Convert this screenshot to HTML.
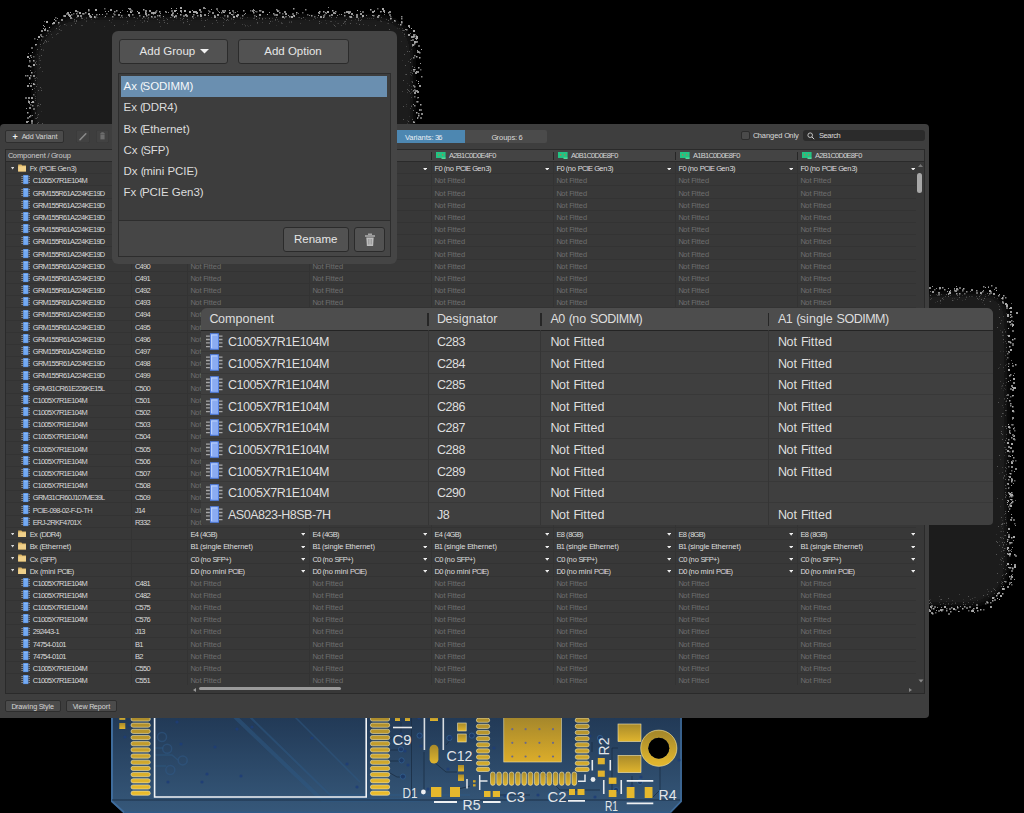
<!DOCTYPE html><html><head><meta charset="utf-8"><style>
*{box-sizing:border-box}
html,body{margin:0;padding:0;background:#000;width:1024px;height:813px;overflow:hidden;font-family:"Liberation Sans", sans-serif}
.a{position:absolute}
.sh{position:absolute;background:#131313;filter:blur(2px)}
#win{position:absolute;left:0;top:124px;width:929px;height:593.5px;background:#3e3e3e;border-radius:4px 4px 4px 0}
.btn{position:absolute;background:#4b4b4b;border:1px solid #2e2e2e;border-radius:2px;color:#d6d6d6;font-size:7.2px;text-align:center}
#tbl{position:absolute;left:4.5px;top:25.4px;width:920px;height:544.5px;background:#383838;border:1px solid #2a2a2a}
.hdr{position:absolute;left:0;top:0;width:918px;height:11.6px;background:#444444;border-bottom:1px solid #2a2a2a}
.t{position:absolute;white-space:nowrap;font-size:7.5px;line-height:9px;color:#dadada}
.t{letter-spacing:-0.05px}
x{letter-spacing:-0.74px}
y{letter-spacing:-0.45px}
z{letter-spacing:-0.3px}
.nf{color:#6e6e6e}
.rl{position:absolute;left:0;width:910px;height:1px;background:#333333}
.vl{position:absolute;width:1px;background:#333333}
.ci{position:absolute}
.fo{position:absolute}
.tr{position:absolute}
#pop{position:absolute;left:111.5px;top:31px;width:285.5px;height:232.5px;background:#454545;border-radius:6px}
.pbtn{position:absolute;background:#525252;border:1px solid #2b2b2b;border-radius:3px;color:#e6e6e6;font-size:11.5px;text-align:center}
#ov{position:absolute;left:200.5px;top:308px;width:792.5px;height:216.5px;background:#3f3f3f;border-radius:6px 6px 4px 4px;overflow:hidden}
.ot{position:absolute;white-space:nowrap;font-size:12.5px;line-height:14px;color:#dedede;letter-spacing:0.05px}
#ov x{letter-spacing:-0.48px}
#ov y{letter-spacing:-0.5px}
#ov z{letter-spacing:0.3px}
#pop y{letter-spacing:-1.4px}
#pop z{letter-spacing:0px}
#pop x{letter-spacing:-0.05px}

</style></head><body>
<svg class="a" style="left:0;top:0" width="1024" height="813" viewBox="0 0 1024 813"><defs><filter id="sb" x="-5%" y="-5%" width="110%" height="110%"><feGaussianBlur stdDeviation="3"/></filter></defs><path d="M82 17H378A35 35 0 0 1 413 52V150A0 0 0 0 1 413 150H34A0 0 0 0 1 34 150V65A48 48 0 0 1 82 17Z" fill="#1a1a1a" filter="url(#sb)"/><path d="M180 7h2v2h-2zM171 8h1v1h-1zM382 8h2v2h-2zM95 9h2v2h-2zM143 9h1.5v1.5h-1.5zM370 9h1.5v1.5h-1.5zM174 10h2v2h-2zM176 10h1v1h-1zM184 10h2v2h-2zM229 10h1v1h-1zM277 10h2v2h-2zM332 10h1.5v1.5h-1.5zM357 10h1v1h-1zM130 11h2v2h-2zM137 11h1v1h-1zM159 11h1.5v1.5h-1.5zM189 11h2v2h-2zM193 11h2v2h-2zM195 11h2v2h-2zM223 11h2v2h-2zM319 11h1.5v1.5h-1.5zM323 11h1.5v1.5h-1.5zM327 11h2v2h-2zM374 11h1v1h-1zM70 12h1v1h-1zM79 12h2v2h-2zM120 12h1v1h-1zM138 12h2v2h-2zM145 12h1.5v1.5h-1.5zM153 12h2v2h-2zM196 12h2v2h-2zM219 12h1v1h-1zM296 12h1.5v1.5h-1.5zM318 12h1.5v1.5h-1.5zM384 12h1v1h-1zM83 13h1.5v1.5h-1.5zM88 13h2v2h-2zM173 13h1v1h-1zM319 13h1v1h-1zM335 13h1v1h-1zM99 14h1v1h-1zM180 14h1.5v1.5h-1.5zM200 14h1.5v1.5h-1.5zM231 14h1v1h-1zM267 14h1v1h-1zM69 15h2v2h-2zM159 15h1.5v1.5h-1.5zM172 15h1.5v1.5h-1.5zM236 15h2v2h-2zM293 15h1.5v1.5h-1.5zM294 15h1v1h-1zM318 15h1v1h-1zM362 15h2v2h-2zM378 15h1.5v1.5h-1.5zM94 16h2v2h-2zM151 16h1.5v1.5h-1.5zM174 16h2v2h-2zM175 16h1.5v1.5h-1.5zM233 16h2v2h-2zM256 16h1v1h-1zM291 16h2v2h-2zM294 16h1v1h-1zM323 16h2v2h-2zM390 18h1.5v1.5h-1.5zM54 19h1v1h-1zM394 20h1.5v1.5h-1.5zM46 21h2v2h-2zM53 22h2v2h-2zM58 22h1.5v1.5h-1.5zM401 22h1.5v1.5h-1.5zM52 23h1.5v1.5h-1.5zM400 24h1.5v1.5h-1.5zM43 25h1v1h-1zM49 27h1v1h-1zM409 27h1v1h-1zM411 28h1v1h-1zM413 30h2v2h-2zM414 34h1.5v1.5h-1.5zM38 36h2v2h-2zM413 36h1v1h-1zM416 36h2v2h-2zM416 37h2v2h-2zM414 41h2v2h-2zM35 44h1.5v1.5h-1.5zM421 49h1v1h-1zM27 56h2v2h-2zM416 56h1.5v1.5h-1.5zM419 57h1.5v1.5h-1.5zM33 60h1.5v1.5h-1.5zM33 64h2v2h-2zM418 67h1.5v1.5h-1.5zM413 69h2v2h-2zM416 71h2v2h-2zM31 72h1.5v1.5h-1.5zM29 77h1.5v1.5h-1.5zM418 81h1v1h-1zM33 83h2v2h-2zM418 83h1v1h-1zM32 101h2v2h-2zM31 102h1v1h-1zM420 104h1.5v1.5h-1.5zM27 112h1.5v1.5h-1.5zM416 112h1.5v1.5h-1.5zM418 115h1.5v1.5h-1.5zM29 116h1.5v1.5h-1.5zM413 122h1v1h-1zM414 122h1v1h-1z" fill="#aaaaaa"/><path d="M203 7h2v2h-2zM328 7h1v1h-1zM129 8h2v2h-2zM205 8h1v1h-1zM130 9h1.5v1.5h-1.5zM305 9h1.5v1.5h-1.5zM88 10h1.5v1.5h-1.5zM145 10h2v2h-2zM222 10h2v2h-2zM252 10h2v2h-2zM260 10h1.5v1.5h-1.5zM374 10h1v1h-1zM77 11h1.5v1.5h-1.5zM209 11h1.5v1.5h-1.5zM284 11h2v2h-2zM349 11h2v2h-2zM360 11h1v1h-1zM389 11h2v2h-2zM166 12h1v1h-1zM168 12h1v1h-1zM181 12h1v1h-1zM212 12h2v2h-2zM221 12h1.5v1.5h-1.5zM235 12h1v1h-1zM76 13h1.5v1.5h-1.5zM82 13h1.5v1.5h-1.5zM152 13h1v1h-1zM326 13h1v1h-1zM69 14h1v1h-1zM71 14h1.5v1.5h-1.5zM96 14h1.5v1.5h-1.5zM114 14h1.5v1.5h-1.5zM118 14h2v2h-2zM132 14h1.5v1.5h-1.5zM193 14h1.5v1.5h-1.5zM204 14h2v2h-2zM244 14h1v1h-1zM276 14h2v2h-2zM331 14h2v2h-2zM356 14h2v2h-2zM80 15h2v2h-2zM121 15h1.5v1.5h-1.5zM139 15h1.5v1.5h-1.5zM157 15h1.5v1.5h-1.5zM175 15h2v2h-2zM186 15h2v2h-2zM197 15h1.5v1.5h-1.5zM227 15h1.5v1.5h-1.5zM242 15h1.5v1.5h-1.5zM309 15h1v1h-1zM329 15h1.5v1.5h-1.5zM337 15h1v1h-1zM366 15h1v1h-1zM373 15h1.5v1.5h-1.5zM379 15h1v1h-1zM112 16h1.5v1.5h-1.5zM129 16h1v1h-1zM289 16h1.5v1.5h-1.5zM349 16h1.5v1.5h-1.5zM356 16h2v2h-2zM377 16h2v2h-2zM401 16h1.5v1.5h-1.5zM70 17h2v2h-2zM57 18h1v1h-1zM391 18h1v1h-1zM401 18h1.5v1.5h-1.5zM61 19h2v2h-2zM55 20h1.5v1.5h-1.5zM45 28h1v1h-1zM406 29h1.5v1.5h-1.5zM41 30h2v2h-2zM413 34h2v2h-2zM41 36h1v1h-1zM413 37h1v1h-1zM37 39h1v1h-1zM411 40h1v1h-1zM416 41h2v2h-2zM413 44h1.5v1.5h-1.5zM417 51h2v2h-2zM32 52h1v1h-1zM414 55h1.5v1.5h-1.5zM31 57h1v1h-1zM413 57h1.5v1.5h-1.5zM29 58h1v1h-1zM29 60h1.5v1.5h-1.5zM28 65h2v2h-2zM30 66h1.5v1.5h-1.5zM417 71h2v2h-2zM25 75h1.5v1.5h-1.5zM27 75h1.5v1.5h-1.5zM33 75h2v2h-2zM421 76h1.5v1.5h-1.5zM30 85h2v2h-2zM413 85h1.5v1.5h-1.5zM414 86h1.5v1.5h-1.5zM413 90h1.5v1.5h-1.5zM415 90h2v2h-2zM416 90h2v2h-2zM28 97h2v2h-2zM29 103h1v1h-1zM32 105h1.5v1.5h-1.5zM414 105h1.5v1.5h-1.5zM29 107h2v2h-2zM419 109h1v1h-1zM419 110h1v1h-1zM418 113h1.5v1.5h-1.5zM421 113h2v2h-2zM30 115h1.5v1.5h-1.5zM32 115h1v1h-1zM417 117h1.5v1.5h-1.5zM31 120h2v2h-2zM413 121h1.5v1.5h-1.5z" fill="#888888"/><path d="M104 8h1.5v1.5h-1.5zM216 8h2v2h-2zM377 8h1.5v1.5h-1.5zM122 10h1v1h-1zM131 10h2v2h-2zM156 10h1.5v1.5h-1.5zM171 10h2v2h-2zM208 10h1.5v1.5h-1.5zM217 10h1v1h-1zM224 10h2v2h-2zM232 10h2v2h-2zM250 10h1.5v1.5h-1.5zM278 10h1.5v1.5h-1.5zM155 11h2v2h-2zM200 11h2v2h-2zM218 11h1v1h-1zM233 11h1v1h-1zM237 11h1v1h-1zM255 11h1v1h-1zM256 11h1.5v1.5h-1.5zM362 11h2v2h-2zM381 11h1v1h-1zM172 12h2v2h-2zM233 12h1.5v1.5h-1.5zM302 12h1.5v1.5h-1.5zM66 13h2v2h-2zM73 13h1.5v1.5h-1.5zM106 13h1.5v1.5h-1.5zM113 13h1.5v1.5h-1.5zM282 13h1.5v1.5h-1.5zM292 13h2v2h-2zM298 13h1v1h-1zM153 14h1v1h-1zM274 14h2v2h-2zM296 14h1v1h-1zM307 14h1.5v1.5h-1.5zM324 14h1.5v1.5h-1.5zM339 14h1v1h-1zM384 14h1v1h-1zM389 14h2v2h-2zM63 15h2v2h-2zM183 15h2v2h-2zM224 15h1.5v1.5h-1.5zM254 15h1.5v1.5h-1.5zM323 15h2v2h-2zM353 15h1v1h-1zM95 16h1.5v1.5h-1.5zM154 16h2v2h-2zM285 16h1.5v1.5h-1.5zM286 16h1v1h-1zM314 16h1.5v1.5h-1.5zM390 16h1.5v1.5h-1.5zM55 17h1.5v1.5h-1.5zM44 21h1v1h-1zM395 21h1v1h-1zM410 33h1v1h-1zM40 34h2v2h-2zM416 35h1v1h-1zM42 36h1.5v1.5h-1.5zM34 38h1.5v1.5h-1.5zM412 39h2v2h-2zM417 42h1v1h-1zM418 45h2v2h-2zM31 47h2v2h-2zM28 53h1v1h-1zM33 56h1.5v1.5h-1.5zM29 61h1.5v1.5h-1.5zM414 67h1v1h-1zM415 69h1v1h-1zM420 69h1.5v1.5h-1.5zM30 70h1v1h-1zM413 70h2v2h-2zM416 80h1v1h-1zM31 83h1v1h-1zM414 87h1v1h-1zM414 89h1.5v1.5h-1.5zM33 94h1.5v1.5h-1.5zM414 96h1.5v1.5h-1.5zM25 97h2v2h-2zM417 97h1.5v1.5h-1.5zM28 100h1v1h-1zM416 101h1.5v1.5h-1.5zM30 104h1.5v1.5h-1.5zM33 108h2v2h-2zM420 109h2v2h-2zM413 110h1v1h-1zM27 117h2v2h-2zM420 117h2v2h-2zM31 122h2v2h-2z" fill="#666666"/><path d="M128 8h1v1h-1zM176 8h1v1h-1zM293 8h1.5v1.5h-1.5zM88 9h1.5v1.5h-1.5zM110 9h2v2h-2zM199 9h2v2h-2zM211 9h1v1h-1zM253 9h1v1h-1zM276 9h1.5v1.5h-1.5zM75 10h2v2h-2zM116 10h1.5v1.5h-1.5zM149 10h2v2h-2zM180 10h2v2h-2zM192 10h1v1h-1zM225 10h1v1h-1zM243 10h1.5v1.5h-1.5zM254 10h1v1h-1zM259 10h1.5v1.5h-1.5zM383 10h2v2h-2zM105 11h1v1h-1zM108 11h1v1h-1zM114 11h1.5v1.5h-1.5zM127 11h1v1h-1zM165 11h1.5v1.5h-1.5zM262 11h2v2h-2zM335 11h1.5v1.5h-1.5zM346 11h2v2h-2zM347 11h2v2h-2zM372 11h2v2h-2zM380 11h1.5v1.5h-1.5zM67 12h2v2h-2zM85 12h1.5v1.5h-1.5zM151 12h2v2h-2zM154 12h2v2h-2zM229 12h2v2h-2zM253 12h1.5v1.5h-1.5zM269 12h1v1h-1zM279 12h1.5v1.5h-1.5zM325 12h1.5v1.5h-1.5zM333 12h2v2h-2zM344 12h1.5v1.5h-1.5zM348 12h2v2h-2zM388 12h1.5v1.5h-1.5zM145 13h2v2h-2zM160 13h1v1h-1zM172 13h1.5v1.5h-1.5zM177 13h1v1h-1zM208 13h1v1h-1zM245 13h1v1h-1zM273 13h1.5v1.5h-1.5zM285 13h2v2h-2zM351 13h2v2h-2zM360 13h2v2h-2zM68 14h2v2h-2zM92 14h1v1h-1zM102 14h1v1h-1zM128 14h2v2h-2zM148 14h1.5v1.5h-1.5zM171 14h2v2h-2zM185 14h2v2h-2zM217 14h2v2h-2zM232 14h1.5v1.5h-1.5zM237 14h2v2h-2zM259 14h2v2h-2zM341 14h1v1h-1zM361 14h1v1h-1zM64 15h2v2h-2zM77 15h2v2h-2zM89 15h2v2h-2zM129 15h1v1h-1zM146 15h1.5v1.5h-1.5zM200 15h2v2h-2zM208 15h1v1h-1zM214 15h1.5v1.5h-1.5zM288 15h1v1h-1zM311 15h1.5v1.5h-1.5zM344 15h1.5v1.5h-1.5zM372 15h1v1h-1zM90 16h2v2h-2zM105 16h1v1h-1zM143 16h1.5v1.5h-1.5zM163 16h1v1h-1zM192 16h1.5v1.5h-1.5zM214 16h2v2h-2zM227 16h1.5v1.5h-1.5zM282 16h2v2h-2zM320 16h2v2h-2zM350 16h2v2h-2zM401 21h1.5v1.5h-1.5zM408 25h2v2h-2zM44 26h1v1h-1zM43 28h1v1h-1zM44 29h2v2h-2zM405 29h1v1h-1zM47 30h1.5v1.5h-1.5zM408 34h2v2h-2zM411 36h2v2h-2zM414 36h1.5v1.5h-1.5zM415 38h1v1h-1zM416 39h1v1h-1zM414 43h1.5v1.5h-1.5zM36 44h1v1h-1zM412 44h2v2h-2zM417 50h1v1h-1zM418 51h1.5v1.5h-1.5zM419 52h1.5v1.5h-1.5zM30 55h1.5v1.5h-1.5zM420 63h1v1h-1zM415 72h2v2h-2zM30 75h1.5v1.5h-1.5zM29 78h1.5v1.5h-1.5zM29 83h1v1h-1zM27 85h2v2h-2zM419 85h2v2h-2zM32 89h1v1h-1zM417 91h2v2h-2zM414 92h2v2h-2zM415 93h1v1h-1zM31 97h2v2h-2zM418 97h1v1h-1zM28 101h2v2h-2zM417 101h1.5v1.5h-1.5zM413 104h1v1h-1zM26 108h1v1h-1zM417 118h1v1h-1zM26 121h2v2h-2zM28 121h1v1h-1z" fill="#999999"/><path d="M76 17h1v1h-1zM126 17h1v1h-1zM160 17h1v1h-1zM237 17h1v1h-1zM299 17h1v1h-1zM317 17h1v1h-1zM324 17h1v1h-1zM362 17h1v1h-1zM381 17h1v1h-1zM72 18h1v1h-1zM86 18h1v1h-1zM137 18h1v1h-1zM180 18h1v1h-1zM231 18h1v1h-1zM240 18h1v1h-1zM253 18h1v1h-1zM254 18h1v1h-1zM265 18h1v1h-1zM315 18h1v1h-1zM373 18h1v1h-1zM182 19h1v1h-1zM224 19h1v1h-1zM233 19h1v1h-1zM262 19h1v1h-1zM277 19h1v1h-1zM358 19h1v1h-1zM361 19h1v1h-1zM386 19h1v1h-1zM144 20h1v1h-1zM163 20h1v1h-1zM164 20h1v1h-1zM201 20h1v1h-1zM228 20h1v1h-1zM275 20h1v1h-1zM309 20h1v1h-1zM351 20h1v1h-1zM74 21h1v1h-1zM86 21h1v1h-1zM144 21h1v1h-1zM278 21h1v1h-1zM291 21h1v1h-1zM330 21h1v1h-1zM331 21h1v1h-1zM344 21h1v1h-1zM381 21h1v1h-1zM142 22h1v1h-1zM217 22h1v1h-1zM223 22h1v1h-1zM262 22h1v1h-1zM281 22h1v1h-1zM289 22h1v1h-1zM291 22h1v1h-1zM344 22h1v1h-1zM392 22h1v1h-1zM212 23h1v1h-1zM234 23h1v1h-1zM257 23h1v1h-1zM281 23h1v1h-1zM282 23h1v1h-1zM300 23h1v1h-1zM326 23h1v1h-1zM338 23h1v1h-1zM356 23h1v1h-1zM388 23h1v1h-1zM242 24h1v1h-1zM363 24h1v1h-1zM398 24h1v1h-1zM81 25h1v1h-1zM82 25h1v1h-1zM134 25h1v1h-1zM245 25h1v1h-1zM250 25h1v1h-1zM341 25h1v1h-1zM59 26h1v1h-1zM160 26h1v1h-1zM335 26h1v1h-1zM61 30h1v1h-1zM402 30h1v1h-1zM404 30h1v1h-1zM50 31h1v1h-1zM57 33h1v1h-1zM51 34h1v1h-1zM56 34h1v1h-1zM52 37h1v1h-1zM41 40h1v1h-1zM410 40h1v1h-1zM48 41h1v1h-1zM44 42h1v1h-1zM406 46h1v1h-1zM43 50h1v1h-1zM39 56h1v1h-1zM39 58h1v1h-1zM411 58h1v1h-1zM40 60h1v1h-1zM34 61h1v1h-1zM36 61h1v1h-1zM408 61h1v1h-1zM35 63h1v1h-1zM39 64h1v1h-1zM411 70h1v1h-1zM42 71h1v1h-1zM410 72h1v1h-1zM405 74h1v1h-1zM36 77h1v1h-1zM35 78h1v1h-1zM412 81h1v1h-1zM409 85h1v1h-1zM34 88h1v1h-1zM402 91h1v1h-1zM407 92h1v1h-1zM410 93h1v1h-1zM35 96h1v1h-1zM411 97h1v1h-1zM35 98h1v1h-1zM35 100h1v1h-1zM38 103h1v1h-1zM406 104h1v1h-1zM37 106h1v1h-1zM410 108h1v1h-1zM35 112h1v1h-1zM35 118h1v1h-1z" fill="#404040"/><path d="M77 17h1v1h-1zM86 17h1v1h-1zM89 17h1v1h-1zM97 17h1v1h-1zM104 17h1v1h-1zM133 17h1v1h-1zM171 17h1v1h-1zM175 17h1v1h-1zM195 17h1v1h-1zM211 17h1v1h-1zM217 17h1v1h-1zM220 17h1v1h-1zM222 17h1v1h-1zM240 17h1v1h-1zM247 17h1v1h-1zM254 17h1v1h-1zM259 17h1v1h-1zM298 17h1v1h-1zM352 17h1v1h-1zM360 17h1v1h-1zM95 18h1v1h-1zM145 18h1v1h-1zM147 18h1v1h-1zM148 18h1v1h-1zM153 18h1v1h-1zM163 18h1v1h-1zM166 18h1v1h-1zM176 18h1v1h-1zM201 18h1v1h-1zM272 18h1v1h-1zM367 18h1v1h-1zM369 18h1v1h-1zM371 18h1v1h-1zM84 19h1v1h-1zM91 19h1v1h-1zM112 19h1v1h-1zM148 19h1v1h-1zM207 19h1v1h-1zM231 19h1v1h-1zM305 19h1v1h-1zM313 19h1v1h-1zM355 19h1v1h-1zM74 20h1v1h-1zM86 20h1v1h-1zM140 20h1v1h-1zM159 20h1v1h-1zM173 20h1v1h-1zM180 20h1v1h-1zM191 20h1v1h-1zM325 20h1v1h-1zM380 20h1v1h-1zM135 21h1v1h-1zM272 21h1v1h-1zM289 21h1v1h-1zM335 21h1v1h-1zM380 21h1v1h-1zM94 22h1v1h-1zM111 22h1v1h-1zM235 22h1v1h-1zM321 22h1v1h-1zM127 23h1v1h-1zM183 23h1v1h-1zM337 23h1v1h-1zM345 23h1v1h-1zM387 23h1v1h-1zM58 24h1v1h-1zM65 24h1v1h-1zM123 24h1v1h-1zM244 24h1v1h-1zM333 24h1v1h-1zM345 24h1v1h-1zM60 25h1v1h-1zM66 25h1v1h-1zM247 25h1v1h-1zM276 25h1v1h-1zM368 25h1v1h-1zM104 26h1v1h-1zM245 26h1v1h-1zM248 26h1v1h-1zM286 26h1v1h-1zM397 28h1v1h-1zM399 28h1v1h-1zM402 28h1v1h-1zM60 30h1v1h-1zM402 32h1v1h-1zM48 33h1v1h-1zM58 33h1v1h-1zM404 33h1v1h-1zM404 36h1v1h-1zM41 39h1v1h-1zM44 41h1v1h-1zM401 41h1v1h-1zM46 42h1v1h-1zM40 46h1v1h-1zM43 49h1v1h-1zM411 49h1v1h-1zM37 54h1v1h-1zM39 60h1v1h-1zM402 60h1v1h-1zM39 68h1v1h-1zM35 71h1v1h-1zM34 72h1v1h-1zM411 72h1v1h-1zM410 74h1v1h-1zM411 75h1v1h-1zM34 78h1v1h-1zM37 78h1v1h-1zM411 81h1v1h-1zM407 83h1v1h-1zM35 84h1v1h-1zM37 84h1v1h-1zM411 86h1v1h-1zM41 88h1v1h-1zM412 91h1v1h-1zM35 92h1v1h-1zM411 92h1v1h-1zM34 102h1v1h-1zM411 105h1v1h-1zM39 106h1v1h-1zM406 106h1v1h-1zM41 111h1v1h-1zM37 115h1v1h-1zM409 116h1v1h-1zM407 120h1v1h-1zM407 123h1v1h-1z" fill="#303030"/><path d="M81 17h1v1h-1zM120 17h1v1h-1zM122 17h1v1h-1zM134 17h1v1h-1zM148 17h1v1h-1zM152 17h1v1h-1zM170 17h1v1h-1zM276 17h1v1h-1zM284 17h1v1h-1zM303 17h1v1h-1zM331 17h1v1h-1zM336 17h1v1h-1zM81 18h1v1h-1zM82 18h1v1h-1zM142 18h1v1h-1zM183 18h1v1h-1zM193 18h1v1h-1zM223 18h1v1h-1zM242 18h1v1h-1zM259 18h1v1h-1zM262 18h1v1h-1zM269 18h1v1h-1zM284 18h1v1h-1zM301 18h1v1h-1zM358 18h1v1h-1zM74 19h1v1h-1zM157 19h1v1h-1zM167 19h1v1h-1zM187 19h1v1h-1zM227 19h1v1h-1zM256 19h1v1h-1zM275 19h1v1h-1zM346 19h1v1h-1zM76 20h1v1h-1zM109 20h1v1h-1zM205 20h1v1h-1zM216 20h1v1h-1zM226 20h1v1h-1zM358 20h1v1h-1zM360 20h1v1h-1zM388 20h1v1h-1zM76 21h1v1h-1zM127 21h1v1h-1zM147 21h1v1h-1zM187 21h1v1h-1zM270 21h1v1h-1zM319 21h1v1h-1zM345 21h1v1h-1zM159 22h1v1h-1zM164 22h1v1h-1zM183 22h1v1h-1zM257 22h1v1h-1zM75 23h1v1h-1zM167 23h1v1h-1zM269 23h1v1h-1zM319 23h1v1h-1zM343 23h1v1h-1zM350 23h1v1h-1zM64 24h1v1h-1zM189 24h1v1h-1zM359 24h1v1h-1zM71 25h1v1h-1zM114 25h1v1h-1zM223 25h1v1h-1zM334 25h1v1h-1zM375 25h1v1h-1zM204 26h1v1h-1zM56 28h1v1h-1zM59 29h1v1h-1zM389 29h1v1h-1zM403 30h1v1h-1zM404 34h1v1h-1zM46 35h1v1h-1zM45 40h1v1h-1zM46 41h1v1h-1zM43 43h1v1h-1zM40 44h1v1h-1zM412 46h1v1h-1zM37 49h1v1h-1zM41 49h1v1h-1zM407 51h1v1h-1zM409 51h1v1h-1zM404 54h1v1h-1zM41 55h1v1h-1zM410 59h1v1h-1zM35 62h1v1h-1zM410 62h1v1h-1zM36 64h1v1h-1zM405 65h1v1h-1zM412 66h1v1h-1zM40 67h1v1h-1zM412 73h1v1h-1zM406 74h1v1h-1zM35 80h1v1h-1zM403 80h1v1h-1zM412 82h1v1h-1zM34 83h1v1h-1zM36 86h1v1h-1zM40 87h1v1h-1zM407 89h1v1h-1zM411 89h1v1h-1zM38 90h1v1h-1zM41 90h1v1h-1zM408 90h1v1h-1zM409 91h1v1h-1zM40 104h1v1h-1zM37 105h1v1h-1zM38 105h1v1h-1zM403 106h1v1h-1zM411 106h1v1h-1zM35 113h1v1h-1zM38 114h1v1h-1zM37 117h1v1h-1zM36 118h1v1h-1zM403 119h1v1h-1zM412 119h1v1h-1zM408 121h1v1h-1zM38 122h1v1h-1zM37 123h1v1h-1zM42 123h1v1h-1z" fill="#555555"/><path d="M860 294H984A23 23 0 0 1 1007 317V567A38 38 0 0 1 969 605H860A0 0 0 0 1 860 605V294A0 0 0 0 1 860 294Z" fill="#1a1a1a" filter="url(#sb)"/><path d="M991 285h1.5v1.5h-1.5zM956 286h1v1h-1zM983 286h1.5v1.5h-1.5zM929 287h2v2h-2zM936 288h1v1h-1zM939 288h1.5v1.5h-1.5zM971 289h2v2h-2zM994 289h1v1h-1zM954 290h1.5v1.5h-1.5zM955 290h2v2h-2zM962 290h1.5v1.5h-1.5zM976 290h1.5v1.5h-1.5zM966 291h1.5v1.5h-1.5zM982 291h1.5v1.5h-1.5zM938 292h2v2h-2zM989 293h1.5v1.5h-1.5zM1005 297h1.5v1.5h-1.5zM1001 298h1v1h-1zM1002 301h1.5v1.5h-1.5zM1002 302h2v2h-2zM1006 304h2v2h-2zM1011 320h1.5v1.5h-1.5zM1010 324h1.5v1.5h-1.5zM1009 352h1v1h-1zM1012 363h1v1h-1zM1010 374h1.5v1.5h-1.5zM1010 380h1v1h-1zM1013 382h2v2h-2zM1011 385h2v2h-2zM1012 389h2v2h-2zM1007 398h1v1h-1zM1010 405h1.5v1.5h-1.5zM1012 417h2v2h-2zM1009 430h1.5v1.5h-1.5zM1009 431h1v1h-1zM1013 438h2v2h-2zM1008 439h1.5v1.5h-1.5zM1014 439h1.5v1.5h-1.5zM1008 446h2v2h-2zM1010 447h2v2h-2zM1008 462h1v1h-1zM1011 466h2v2h-2zM1015 468h2v2h-2zM1008 479h1.5v1.5h-1.5zM1013 483h1v1h-1zM1009 494h1v1h-1zM1012 495h1.5v1.5h-1.5zM1011 496h1.5v1.5h-1.5zM1010 503h1.5v1.5h-1.5zM1009 509h1v1h-1zM1010 519h2v2h-2zM1015 525h1v1h-1zM1013 540h1v1h-1zM1012 547h1v1h-1zM1011 551h1v1h-1zM1009 555h1.5v1.5h-1.5zM1010 567h1.5v1.5h-1.5zM1006 573h1v1h-1zM1004 581h1v1h-1zM1005 581h1.5v1.5h-1.5zM1007 586h2v2h-2zM1003 588h2v2h-2zM998 592h2v2h-2zM990 602h1.5v1.5h-1.5zM945 606h1v1h-1zM960 606h1v1h-1zM937 607h1v1h-1zM941 607h1v1h-1zM951 607h1.5v1.5h-1.5zM969 607h1v1h-1zM970 607h1v1h-1zM931 612h2v2h-2zM974 612h1v1h-1z" fill="#888888"/><path d="M932 286h1v1h-1zM939 287h2v2h-2zM942 287h1.5v1.5h-1.5zM948 288h1v1h-1zM954 288h1v1h-1zM956 288h2v2h-2zM944 289h1.5v1.5h-1.5zM957 289h1.5v1.5h-1.5zM950 290h1v1h-1zM983 290h1v1h-1zM932 291h2v2h-2zM947 291h1v1h-1zM980 292h2v2h-2zM948 293h2v2h-2zM956 293h1.5v1.5h-1.5zM959 293h1.5v1.5h-1.5zM993 293h2v2h-2zM998 295h1.5v1.5h-1.5zM1003 295h1.5v1.5h-1.5zM1010 311h2v2h-2zM1016 312h2v2h-2zM1011 316h1.5v1.5h-1.5zM1010 317h1v1h-1zM1007 321h1.5v1.5h-1.5zM1009 321h2v2h-2zM1014 338h1.5v1.5h-1.5zM1008 351h1.5v1.5h-1.5zM1013 375h1v1h-1zM1008 381h1v1h-1zM1013 395h1v1h-1zM1010 403h1.5v1.5h-1.5zM1012 424h1.5v1.5h-1.5zM1013 428h1.5v1.5h-1.5zM1009 432h1.5v1.5h-1.5zM1010 433h1v1h-1zM1013 435h2v2h-2zM1011 437h1.5v1.5h-1.5zM1013 457h1.5v1.5h-1.5zM1011 461h1v1h-1zM1014 471h1v1h-1zM1009 476h2v2h-2zM1011 478h1.5v1.5h-1.5zM1011 479h2v2h-2zM1007 483h2v2h-2zM1011 485h1v1h-1zM1008 488h1v1h-1zM1008 492h1.5v1.5h-1.5zM1011 492h1.5v1.5h-1.5zM1010 499h1v1h-1zM1007 500h1v1h-1zM1008 500h1v1h-1zM1008 501h1v1h-1zM1007 504h1v1h-1zM1011 514h1v1h-1zM1011 517h1.5v1.5h-1.5zM1008 528h2v2h-2zM1007 532h1v1h-1zM1008 536h2v2h-2zM1007 539h1.5v1.5h-1.5zM1009 542h2v2h-2zM1011 542h1.5v1.5h-1.5zM1008 550h1.5v1.5h-1.5zM1014 564h2v2h-2zM1011 575h1v1h-1zM1011 576h2v2h-2zM1014 579h1v1h-1zM1009 584h1v1h-1zM1003 586h1v1h-1zM957 606h1v1h-1zM964 606h1.5v1.5h-1.5zM990 606h2v2h-2zM976 607h2v2h-2zM973 608h1.5v1.5h-1.5zM929 609h1v1h-1zM940 609h2v2h-2zM942 609h1.5v1.5h-1.5zM929 610h2v2h-2zM936 610h1v1h-1zM946 610h1.5v1.5h-1.5zM971 610h2v2h-2zM977 610h1.5v1.5h-1.5zM950 611h1.5v1.5h-1.5z" fill="#999999"/><path d="M988 286h1v1h-1zM959 287h2v2h-2zM995 287h2v2h-2zM934 289h1.5v1.5h-1.5zM954 289h1v1h-1zM962 289h1.5v1.5h-1.5zM930 291h1v1h-1zM970 291h1v1h-1zM990 291h2v2h-2zM976 292h2v2h-2zM990 292h2v2h-2zM938 293h2v2h-2zM964 293h1.5v1.5h-1.5zM987 293h1v1h-1zM1011 303h1v1h-1zM1006 307h2v2h-2zM1013 321h1v1h-1zM1011 323h2v2h-2zM1012 330h2v2h-2zM1007 335h1v1h-1zM1009 341h2v2h-2zM1012 343h2v2h-2zM1012 344h2v2h-2zM1007 353h1.5v1.5h-1.5zM1007 357h1.5v1.5h-1.5zM1011 360h1v1h-1zM1008 363h1.5v1.5h-1.5zM1012 365h2v2h-2zM1014 373h1v1h-1zM1010 388h2v2h-2zM1007 394h2v2h-2zM1010 396h1.5v1.5h-1.5zM1013 411h1.5v1.5h-1.5zM1012 419h1v1h-1zM1011 424h1.5v1.5h-1.5zM1014 427h1v1h-1zM1014 430h1.5v1.5h-1.5zM1012 434h2v2h-2zM1012 450h2v2h-2zM1009 451h1.5v1.5h-1.5zM1008 455h2v2h-2zM1007 460h1.5v1.5h-1.5zM1012 460h2v2h-2zM1015 460h1.5v1.5h-1.5zM1008 466h1.5v1.5h-1.5zM1011 470h1.5v1.5h-1.5zM1009 473h1v1h-1zM1008 476h1v1h-1zM1014 480h1.5v1.5h-1.5zM1007 484h1v1h-1zM1008 487h1.5v1.5h-1.5zM1010 494h1v1h-1zM1009 496h1.5v1.5h-1.5zM1015 500h1v1h-1zM1009 504h2v2h-2zM1008 506h1.5v1.5h-1.5zM1009 508h1.5v1.5h-1.5zM1013 519h2v2h-2zM1010 520h1v1h-1zM1014 523h1.5v1.5h-1.5zM1008 534h2v2h-2zM1009 543h1.5v1.5h-1.5zM1011 549h1v1h-1zM1010 550h1v1h-1zM1015 555h2v2h-2zM1012 567h1.5v1.5h-1.5zM1011 570h2v2h-2zM1012 574h1v1h-1zM1010 578h2v2h-2zM1009 582h2v2h-2zM1011 584h1.5v1.5h-1.5zM994 599h2v2h-2zM986 601h2v2h-2zM985 603h1.5v1.5h-1.5zM976 604h2v2h-2zM931 605h2v2h-2zM934 606h2v2h-2zM969 606h2v2h-2zM930 607h1v1h-1zM966 607h2v2h-2zM931 608h1.5v1.5h-1.5zM946 608h1.5v1.5h-1.5zM949 608h2v2h-2zM955 609h1.5v1.5h-1.5zM972 609h1v1h-1zM983 609h1.5v1.5h-1.5zM938 610h2v2h-2zM968 610h1.5v1.5h-1.5zM959 611h1v1h-1zM935 612h1.5v1.5h-1.5zM948 613h2v2h-2z" fill="#666666"/><path d="M985 287h1v1h-1zM988 287h1v1h-1zM963 288h1.5v1.5h-1.5zM989 290h2v2h-2zM996 290h1v1h-1zM949 291h1.5v1.5h-1.5zM949 292h2v2h-2zM980 293h1v1h-1zM999 294h1v1h-1zM1002 297h1.5v1.5h-1.5zM1002 298h1.5v1.5h-1.5zM1005 303h2v2h-2zM1006 305h2v2h-2zM1010 307h2v2h-2zM1009 308h1v1h-1zM1007 314h2v2h-2zM1010 314h1.5v1.5h-1.5zM1007 315h2v2h-2zM1012 324h2v2h-2zM1012 326h1v1h-1zM1008 328h1v1h-1zM1008 335h2v2h-2zM1012 339h1.5v1.5h-1.5zM1008 341h1.5v1.5h-1.5zM1010 342h1.5v1.5h-1.5zM1009 346h1.5v1.5h-1.5zM1010 349h2v2h-2zM1015 364h1.5v1.5h-1.5zM1008 366h1v1h-1zM1008 369h2v2h-2zM1009 375h1.5v1.5h-1.5zM1013 378h2v2h-2zM1012 387h1v1h-1zM1013 387h2v2h-2zM1014 387h2v2h-2zM1012 395h1.5v1.5h-1.5zM1009 400h1.5v1.5h-1.5zM1012 406h1.5v1.5h-1.5zM1012 410h2v2h-2zM1008 424h1v1h-1zM1008 426h2v2h-2zM1009 427h1.5v1.5h-1.5zM1007 442h2v2h-2zM1011 443h2v2h-2zM1007 450h2v2h-2zM1012 451h1.5v1.5h-1.5zM1012 455h1v1h-1zM1010 456h1v1h-1zM1011 462h2v2h-2zM1010 473h1.5v1.5h-1.5zM1011 481h1.5v1.5h-1.5zM1009 493h2v2h-2zM1011 494h2v2h-2zM1010 495h1.5v1.5h-1.5zM1011 499h1.5v1.5h-1.5zM1012 501h1.5v1.5h-1.5zM1007 502h1v1h-1zM1011 502h1.5v1.5h-1.5zM1010 505h2v2h-2zM1008 511h1v1h-1zM1013 536h2v2h-2zM1011 537h1.5v1.5h-1.5zM1007 541h1v1h-1zM1007 547h2v2h-2zM1007 549h1v1h-1zM1007 553h1.5v1.5h-1.5zM1009 553h2v2h-2zM1008 554h1v1h-1zM1014 554h1.5v1.5h-1.5zM1007 563h2v2h-2zM1011 564h1v1h-1zM1014 566h2v2h-2zM1008 567h1v1h-1zM1009 567h1.5v1.5h-1.5zM1012 568h1.5v1.5h-1.5zM1009 576h1.5v1.5h-1.5zM1011 582h1v1h-1zM1002 588h2v2h-2zM997 593h1.5v1.5h-1.5zM1002 593h1.5v1.5h-1.5zM996 595h1.5v1.5h-1.5zM1000 595h2v2h-2zM992 597h2v2h-2zM993 597h1.5v1.5h-1.5zM997 598h1v1h-1zM999 599h1v1h-1zM992 600h1.5v1.5h-1.5zM987 602h1.5v1.5h-1.5zM930 606h1.5v1.5h-1.5zM944 606h2v2h-2zM931 607h1v1h-1zM957 607h1.5v1.5h-1.5zM933 608h1.5v1.5h-1.5zM953 608h2v2h-2zM962 608h1.5v1.5h-1.5zM980 609h1.5v1.5h-1.5zM941 610h1.5v1.5h-1.5zM972 610h2v2h-2zM958 611h1v1h-1zM932 613h1.5v1.5h-1.5z" fill="#aaaaaa"/><path d="M936 294h1v1h-1zM949 294h1v1h-1zM985 294h1v1h-1zM959 295h1v1h-1zM962 295h1v1h-1zM980 295h1v1h-1zM966 296h1v1h-1zM971 296h1v1h-1zM972 296h1v1h-1zM943 297h1v1h-1zM952 298h1v1h-1zM954 298h1v1h-1zM979 298h1v1h-1zM997 298h1v1h-1zM953 300h1v1h-1zM962 300h1v1h-1zM989 301h1v1h-1zM935 302h1v1h-1zM982 302h1v1h-1zM940 303h1v1h-1zM1006 313h1v1h-1zM1004 329h1v1h-1zM1000 330h1v1h-1zM1005 332h1v1h-1zM1003 342h1v1h-1zM1000 351h1v1h-1zM1003 351h1v1h-1zM1006 359h1v1h-1zM1006 364h1v1h-1zM999 367h1v1h-1zM1004 371h1v1h-1zM1005 378h1v1h-1zM1001 386h1v1h-1zM1002 386h1v1h-1zM1001 388h1v1h-1zM1004 388h1v1h-1zM1005 389h1v1h-1zM1003 390h1v1h-1zM999 398h1v1h-1zM1004 399h1v1h-1zM1005 401h1v1h-1zM1003 407h1v1h-1zM1006 426h1v1h-1zM1004 455h1v1h-1zM1000 459h1v1h-1zM999 473h1v1h-1zM1000 506h1v1h-1zM1004 514h1v1h-1zM1002 520h1v1h-1zM1003 523h1v1h-1zM1006 525h1v1h-1zM1001 526h1v1h-1zM1002 528h1v1h-1zM1000 531h1v1h-1zM996 534h1v1h-1zM1001 537h1v1h-1zM1002 537h1v1h-1zM1001 538h1v1h-1zM999 541h1v1h-1zM1005 548h1v1h-1zM1004 550h1v1h-1zM1004 553h1v1h-1zM1001 557h1v1h-1zM999 564h1v1h-1zM1003 574h1v1h-1zM1001 581h1v1h-1zM1002 584h1v1h-1zM988 596h1v1h-1zM974 597h1v1h-1zM975 597h1v1h-1zM930 599h1v1h-1zM963 599h1v1h-1zM977 600h1v1h-1zM946 601h1v1h-1zM939 602h1v1h-1zM955 602h1v1h-1zM952 603h1v1h-1zM945 604h1v1h-1zM948 604h1v1h-1zM951 604h1v1h-1zM972 604h1v1h-1z" fill="#303030"/><path d="M941 294h1v1h-1zM981 294h1v1h-1zM937 295h1v1h-1zM938 295h1v1h-1zM939 295h1v1h-1zM950 295h1v1h-1zM988 295h1v1h-1zM945 296h1v1h-1zM969 296h1v1h-1zM976 296h1v1h-1zM985 296h1v1h-1zM966 297h1v1h-1zM994 297h1v1h-1zM931 298h1v1h-1zM930 299h1v1h-1zM943 299h1v1h-1zM957 299h1v1h-1zM965 299h1v1h-1zM978 299h1v1h-1zM937 301h1v1h-1zM940 301h1v1h-1zM1002 303h1v1h-1zM984 304h1v1h-1zM998 304h1v1h-1zM999 306h1v1h-1zM1003 316h1v1h-1zM1001 320h1v1h-1zM1002 331h1v1h-1zM1005 331h1v1h-1zM1002 335h1v1h-1zM1003 335h1v1h-1zM1005 341h1v1h-1zM1006 343h1v1h-1zM1006 351h1v1h-1zM1005 355h1v1h-1zM1000 364h1v1h-1zM1005 365h1v1h-1zM1003 367h1v1h-1zM998 368h1v1h-1zM1000 381h1v1h-1zM1006 382h1v1h-1zM1003 383h1v1h-1zM1002 385h1v1h-1zM1005 385h1v1h-1zM1004 398h1v1h-1zM1006 400h1v1h-1zM1005 404h1v1h-1zM1002 405h1v1h-1zM1006 410h1v1h-1zM1003 413h1v1h-1zM1005 415h1v1h-1zM1006 434h1v1h-1zM1004 442h1v1h-1zM1004 447h1v1h-1zM1005 447h1v1h-1zM1005 449h1v1h-1zM1005 452h1v1h-1zM1006 463h1v1h-1zM1002 467h1v1h-1zM1006 468h1v1h-1zM1005 470h1v1h-1zM1005 471h1v1h-1zM1002 472h1v1h-1zM1006 474h1v1h-1zM1004 476h1v1h-1zM1003 477h1v1h-1zM1003 478h1v1h-1zM1006 488h1v1h-1zM1005 494h1v1h-1zM1005 496h1v1h-1zM997 498h1v1h-1zM1002 499h1v1h-1zM1005 517h1v1h-1zM1005 519h1v1h-1zM1006 522h1v1h-1zM1001 531h1v1h-1zM1003 531h1v1h-1zM1004 535h1v1h-1zM1006 544h1v1h-1zM1003 545h1v1h-1zM1001 551h1v1h-1zM1004 556h1v1h-1zM1000 559h1v1h-1zM1001 560h1v1h-1zM1001 564h1v1h-1zM1003 568h1v1h-1zM1005 569h1v1h-1zM1003 578h1v1h-1zM1001 583h1v1h-1zM993 588h1v1h-1zM987 589h1v1h-1zM995 590h1v1h-1zM988 591h1v1h-1zM994 593h1v1h-1zM959 594h1v1h-1zM939 596h1v1h-1zM972 598h1v1h-1zM940 599h1v1h-1zM970 599h1v1h-1zM952 600h1v1h-1zM968 602h1v1h-1zM973 602h1v1h-1zM931 603h1v1h-1zM943 603h1v1h-1zM948 603h1v1h-1zM955 603h1v1h-1zM940 604h1v1h-1zM965 604h1v1h-1z" fill="#404040"/><path d="M946 294h1v1h-1zM930 295h1v1h-1zM957 295h1v1h-1zM948 296h1v1h-1zM979 296h1v1h-1zM959 297h1v1h-1zM942 298h1v1h-1zM977 298h1v1h-1zM984 298h1v1h-1zM981 299h1v1h-1zM940 300h1v1h-1zM952 300h1v1h-1zM983 300h1v1h-1zM990 301h1v1h-1zM999 309h1v1h-1zM999 317h1v1h-1zM1000 323h1v1h-1zM997 327h1v1h-1zM1002 332h1v1h-1zM1003 339h1v1h-1zM1006 347h1v1h-1zM1006 378h1v1h-1zM1006 395h1v1h-1zM1006 401h1v1h-1zM998 402h1v1h-1zM1005 410h1v1h-1zM1002 413h1v1h-1zM1001 416h1v1h-1zM1002 426h1v1h-1zM1005 426h1v1h-1zM1006 428h1v1h-1zM1001 431h1v1h-1zM1001 433h1v1h-1zM1002 434h1v1h-1zM1006 438h1v1h-1zM1002 439h1v1h-1zM1005 440h1v1h-1zM1006 449h1v1h-1zM999 455h1v1h-1zM997 466h1v1h-1zM1005 467h1v1h-1zM1004 475h1v1h-1zM1005 479h1v1h-1zM1005 485h1v1h-1zM1005 488h1v1h-1zM1005 492h1v1h-1zM1006 495h1v1h-1zM1005 497h1v1h-1zM1005 511h1v1h-1zM1005 513h1v1h-1zM1001 517h1v1h-1zM1002 523h1v1h-1zM1004 523h1v1h-1zM1006 523h1v1h-1zM1001 524h1v1h-1zM1002 524h1v1h-1zM998 526h1v1h-1zM1005 535h1v1h-1zM1000 537h1v1h-1zM1003 538h1v1h-1zM996 541h1v1h-1zM997 542h1v1h-1zM1002 542h1v1h-1zM1004 542h1v1h-1zM1003 544h1v1h-1zM999 545h1v1h-1zM1002 547h1v1h-1zM1004 548h1v1h-1zM1003 550h1v1h-1zM996 554h1v1h-1zM1002 558h1v1h-1zM1003 561h1v1h-1zM1006 565h1v1h-1zM997 573h1v1h-1zM1005 574h1v1h-1zM1002 575h1v1h-1zM997 582h1v1h-1zM1002 582h1v1h-1zM1001 586h1v1h-1zM994 589h1v1h-1zM991 591h1v1h-1zM987 594h1v1h-1zM983 595h1v1h-1zM968 596h1v1h-1zM948 598h1v1h-1zM941 599h1v1h-1zM929 600h1v1h-1zM930 602h1v1h-1zM963 602h1v1h-1zM929 603h1v1h-1zM963 604h1v1h-1z" fill="#555555"/></svg>
<div class="a" id="pcb" style="left:111px;top:700px;width:571px;height:113px"><svg width="571" height="113" viewBox="111 700 571 113" style="display:block"><defs><linearGradient id="bg" x1="0" y1="0" x2="0" y2="1"><stop offset="0" stop-color="#1e3450"/><stop offset="1" stop-color="#36587a"/></linearGradient><linearGradient id="cu" x1="0" y1="0" x2="0" y2="1"><stop offset="0" stop-color="#a88a2a"/><stop offset="1" stop-color="#e0b52e"/></linearGradient><linearGradient id="cug" gradientUnits="userSpaceOnUse" x1="0" y1="712" x2="0" y2="797"><stop offset="0" stop-color="#a8892c"/><stop offset="1" stop-color="#ecbd2c"/></linearGradient><linearGradient id="cu2" x1="0" y1="0" x2="0" y2="1"><stop offset="0" stop-color="#8f782c"/><stop offset="1" stop-color="#dcad2a"/></linearGradient></defs><path d="M111 700H682V801.7L671 813H123.7L111 801.8Z" fill="url(#bg)"/><path d="M112 700V801.4L124.2 812.5" fill="none" stroke="#3f6c9c" stroke-width="2"/><path d="M681 700V801.3L670.5 812" fill="none" stroke="#3f6c9c" stroke-width="1.5"/><path d="M124 812.2H670" stroke="#2f5a86" stroke-width="1.5"/><path d="M230 712L322 800H420" fill="none" stroke="#2e5782" stroke-opacity="0.55" stroke-width="4"/><path d="M245 712L330 795H470" fill="none" stroke="#2e5782" stroke-opacity="0.55" stroke-width="2"/><path d="M290 712L360 782" fill="none" stroke="#2e5782" stroke-opacity="0.55" stroke-width="1.5"/><path d="M155 748H163M155 755H172L178 760M155 766H166" fill="none" stroke="#2e5782" stroke-opacity="0.55" stroke-width="1.5"/><circle cx="162" cy="737" r="4.5" fill="none" stroke="#2e5782" stroke-opacity="0.6" stroke-width="1.5"/><circle cx="167.2" cy="748.7" r="4.5" fill="none" stroke="#2e5782" stroke-opacity="0.6" stroke-width="1.5"/><circle cx="182.7" cy="760.4" r="4.5" fill="none" stroke="#2e5782" stroke-opacity="0.6" stroke-width="1.5"/><circle cx="170.3" cy="770" r="4.5" fill="none" stroke="#2e5782" stroke-opacity="0.6" stroke-width="1.5"/><path d="M390 738H396L401 733V722M390 750H401M390 761H401.6M390 773L397 777H403M411.5 718V798M424 752V790M434 762L446 772H457M446 745L452 738M466 735L472 735M455 790L470 786M592 742V752M632 776V786M618 748H612V790M660 767V790L652 798M500 795H530M540 770L560 790H600" fill="none" stroke="#1a2d44" stroke-opacity="0.8" stroke-width="1"/><path d="M112 800H680" stroke="#1c3048" stroke-opacity="0.5" stroke-width="2"/><circle cx="401" cy="749.3" r="2.6" fill="#1e3a66" stroke="#2f5a88" stroke-width="1"/><circle cx="401.6" cy="760.4" r="2.6" fill="#1e3a66" stroke="#2f5a88" stroke-width="1"/><circle cx="402.9" cy="776.6" r="2.6" fill="#1e3a66" stroke="#2f5a88" stroke-width="1"/><circle cx="419.6" cy="735.6" r="2.6" fill="#1e3a66" stroke="#2f5a88" stroke-width="1"/><circle cx="449.4" cy="738" r="2.6" fill="#1e3a66" stroke="#2f5a88" stroke-width="1"/><circle cx="471.8" cy="735.6" r="2.6" fill="#1e3a66" stroke="#2f5a88" stroke-width="1"/><circle cx="600" cy="738" r="2.6" fill="#1e3a66" stroke="#2f5a88" stroke-width="1"/><circle cx="616" cy="790" r="2.6" fill="#1e3a66" stroke="#2f5a88" stroke-width="1"/><circle cx="640" cy="782" r="2.6" fill="#1e3a66" stroke="#2f5a88" stroke-width="1"/><circle cx="130" cy="725" r="1.6" fill="#1d3d77" fill-opacity="0.85"/><circle cx="125" cy="737" r="1.6" fill="#1d3d77" fill-opacity="0.85"/><circle cx="220" cy="711" r="1.6" fill="#1d3d77" fill-opacity="0.85"/><circle cx="215" cy="747" r="1.6" fill="#1d3d77" fill-opacity="0.85"/><circle cx="252" cy="727" r="1.6" fill="#1d3d77" fill-opacity="0.85"/><circle cx="177" cy="722" r="1.6" fill="#1d3d77" fill-opacity="0.85"/><circle cx="181" cy="744" r="1.6" fill="#1d3d77" fill-opacity="0.85"/><circle cx="207" cy="774" r="1.6" fill="#1d3d77" fill-opacity="0.85"/><circle cx="202" cy="782" r="1.6" fill="#1d3d77" fill-opacity="0.85"/><circle cx="168" cy="782" r="1.6" fill="#1d3d77" fill-opacity="0.85"/><circle cx="237" cy="729" r="1.6" fill="#1d3d77" fill-opacity="0.85"/><circle cx="241" cy="776" r="1.6" fill="#1d3d77" fill-opacity="0.85"/><circle cx="312" cy="738" r="1.6" fill="#1d3d77" fill-opacity="0.85"/><circle cx="347" cy="764" r="1.6" fill="#1d3d77" fill-opacity="0.85"/><circle cx="357" cy="787" r="1.6" fill="#1d3d77" fill-opacity="0.85"/><circle cx="401" cy="734" r="1.6" fill="#1d3d77" fill-opacity="0.85"/><circle cx="405" cy="751" r="1.6" fill="#1d3d77" fill-opacity="0.85"/><circle cx="408" cy="765" r="1.6" fill="#1d3d77" fill-opacity="0.85"/><circle cx="419" cy="718" r="1.6" fill="#1d3d77" fill-opacity="0.85"/><circle cx="421" cy="746" r="1.6" fill="#1d3d77" fill-opacity="0.85"/><circle cx="451" cy="737" r="1.6" fill="#1d3d77" fill-opacity="0.85"/><circle cx="448" cy="769" r="1.6" fill="#1d3d77" fill-opacity="0.85"/><circle cx="494" cy="748" r="1.6" fill="#1d3d77" fill-opacity="0.85"/><circle cx="505" cy="796" r="1.6" fill="#1d3d77" fill-opacity="0.85"/><circle cx="512" cy="779" r="1.6" fill="#1d3d77" fill-opacity="0.85"/><circle cx="538" cy="795" r="1.6" fill="#1d3d77" fill-opacity="0.85"/><circle cx="590" cy="736" r="1.6" fill="#1d3d77" fill-opacity="0.85"/><circle cx="595" cy="797" r="1.6" fill="#1d3d77" fill-opacity="0.85"/><circle cx="632" cy="786" r="1.6" fill="#1d3d77" fill-opacity="0.85"/><circle cx="668" cy="747" r="1.6" fill="#1d3d77" fill-opacity="0.85"/><circle cx="679" cy="760" r="1.6" fill="#1d3d77" fill-opacity="0.85"/><circle cx="641" cy="777" r="1.6" fill="#1d3d77" fill-opacity="0.85"/><circle cx="520" cy="784" r="1.6" fill="#1d3d77" fill-opacity="0.85"/><circle cx="428" cy="789" r="1.6" fill="#1d3d77" fill-opacity="0.85"/><rect x="131" y="716.9" width="19.3" height="4.2" rx="2.1" fill="url(#cug)" stroke="#f3e7b5" stroke-width="0.6"/><rect x="370.4" y="716.9" width="19.3" height="4.2" rx="2.1" fill="url(#cug)" stroke="#f3e7b5" stroke-width="0.6"/><rect x="131" y="723.0799999999999" width="19.3" height="4.2" rx="2.1" fill="url(#cug)" stroke="#f3e7b5" stroke-width="0.6"/><rect x="370.4" y="723.0799999999999" width="19.3" height="4.2" rx="2.1" fill="url(#cug)" stroke="#f3e7b5" stroke-width="0.6"/><rect x="131" y="729.26" width="19.3" height="4.2" rx="2.1" fill="url(#cug)" stroke="#f3e7b5" stroke-width="0.6"/><rect x="370.4" y="729.26" width="19.3" height="4.2" rx="2.1" fill="url(#cug)" stroke="#f3e7b5" stroke-width="0.6"/><rect x="131" y="735.4399999999999" width="19.3" height="4.2" rx="2.1" fill="url(#cug)" stroke="#f3e7b5" stroke-width="0.6"/><rect x="370.4" y="735.4399999999999" width="19.3" height="4.2" rx="2.1" fill="url(#cug)" stroke="#f3e7b5" stroke-width="0.6"/><rect x="131" y="741.62" width="19.3" height="4.2" rx="2.1" fill="url(#cug)" stroke="#f3e7b5" stroke-width="0.6"/><rect x="370.4" y="741.62" width="19.3" height="4.2" rx="2.1" fill="url(#cug)" stroke="#f3e7b5" stroke-width="0.6"/><rect x="131" y="747.8" width="19.3" height="4.2" rx="2.1" fill="url(#cug)" stroke="#f3e7b5" stroke-width="0.6"/><rect x="370.4" y="747.8" width="19.3" height="4.2" rx="2.1" fill="url(#cug)" stroke="#f3e7b5" stroke-width="0.6"/><rect x="131" y="753.98" width="19.3" height="4.2" rx="2.1" fill="url(#cug)" stroke="#f3e7b5" stroke-width="0.6"/><rect x="370.4" y="753.98" width="19.3" height="4.2" rx="2.1" fill="url(#cug)" stroke="#f3e7b5" stroke-width="0.6"/><rect x="131" y="760.16" width="19.3" height="4.2" rx="2.1" fill="url(#cug)" stroke="#f3e7b5" stroke-width="0.6"/><rect x="370.4" y="760.16" width="19.3" height="4.2" rx="2.1" fill="url(#cug)" stroke="#f3e7b5" stroke-width="0.6"/><rect x="131" y="766.34" width="19.3" height="4.2" rx="2.1" fill="url(#cug)" stroke="#f3e7b5" stroke-width="0.6"/><rect x="370.4" y="766.34" width="19.3" height="4.2" rx="2.1" fill="url(#cug)" stroke="#f3e7b5" stroke-width="0.6"/><rect x="131" y="772.52" width="19.3" height="4.2" rx="2.1" fill="url(#cug)" stroke="#f3e7b5" stroke-width="0.6"/><rect x="370.4" y="772.52" width="19.3" height="4.2" rx="2.1" fill="url(#cug)" stroke="#f3e7b5" stroke-width="0.6"/><rect x="131" y="778.6999999999999" width="19.3" height="4.2" rx="2.1" fill="url(#cug)" stroke="#f3e7b5" stroke-width="0.6"/><rect x="370.4" y="778.6999999999999" width="19.3" height="4.2" rx="2.1" fill="url(#cug)" stroke="#f3e7b5" stroke-width="0.6"/><rect x="131" y="784.88" width="19.3" height="4.2" rx="2.1" fill="url(#cug)" stroke="#f3e7b5" stroke-width="0.6"/><rect x="370.4" y="784.88" width="19.3" height="4.2" rx="2.1" fill="url(#cug)" stroke="#f3e7b5" stroke-width="0.6"/><rect x="131" y="791.06" width="19.3" height="4.2" rx="2.1" fill="url(#cug)" stroke="#f3e7b5" stroke-width="0.6"/><rect x="370.4" y="791.06" width="19.3" height="4.2" rx="2.1" fill="url(#cug)" stroke="#f3e7b5" stroke-width="0.6"/><rect x="119.3" y="716" width="6" height="3.8" rx="0" fill="url(#cu)"/><rect x="119.3" y="723" width="6" height="6" rx="0" fill="url(#cu)"/><path d="M154.6 700V797H366.2V700" fill="none" stroke="#f2f4f6" stroke-width="1.6"/><rect x="395" y="716" width="5" height="5" rx="0" fill="url(#cu)"/><rect x="405" y="716" width="5" height="5" rx="0" fill="url(#cu)"/><path d="M393 727.5H412" stroke="#e6e9ec" stroke-width="1.6"/><path d="M424.4 700V750M443.3 700V750" stroke="#d8dde2" stroke-width="1.6"/><rect x="430" y="716" width="8" height="5" rx="0" fill="url(#cu)"/><rect x="429.6" y="744.8" width="8.8" height="18.8" rx="4.4" fill="url(#cu)"/><rect x="457.7" y="723" width="8.5" height="8" rx="0" fill="url(#cu)" stroke="#f3e7b5" stroke-width="0.6"/><rect x="457.7" y="734" width="8.5" height="8" rx="0" fill="url(#cu)" stroke="#f3e7b5" stroke-width="0.6"/><rect x="458" y="765" width="6" height="6.4" rx="0" fill="url(#cu)"/><rect x="458" y="774.5" width="6" height="6.4" rx="0" fill="url(#cu)"/><rect x="476.4" y="718.1" width="13.3" height="4.2" rx="2.1" fill="url(#cug)" stroke="#f3e7b5" stroke-width="0.6"/><rect x="476.4" y="724.25" width="13.3" height="4.2" rx="2.1" fill="url(#cug)" stroke="#f3e7b5" stroke-width="0.6"/><rect x="476.4" y="730.4" width="13.3" height="4.2" rx="2.1" fill="url(#cug)" stroke="#f3e7b5" stroke-width="0.6"/><rect x="476.4" y="736.5500000000001" width="13.3" height="4.2" rx="2.1" fill="url(#cug)" stroke="#f3e7b5" stroke-width="0.6"/><rect x="476.4" y="742.7" width="13.3" height="4.2" rx="2.1" fill="url(#cug)" stroke="#f3e7b5" stroke-width="0.6"/><rect x="476.4" y="748.85" width="13.3" height="4.2" rx="2.1" fill="url(#cug)" stroke="#f3e7b5" stroke-width="0.6"/><rect x="476.4" y="755.0" width="13.3" height="4.2" rx="2.1" fill="url(#cug)" stroke="#f3e7b5" stroke-width="0.6"/><rect x="476.4" y="761.15" width="13.3" height="4.2" rx="2.1" fill="url(#cug)" stroke="#f3e7b5" stroke-width="0.6"/><rect x="476.4" y="767.3000000000001" width="13.3" height="4.2" rx="2.1" fill="url(#cug)" stroke="#f3e7b5" stroke-width="0.6"/><rect x="503.8" y="700" width="57.5" height="62" fill="url(#cu2)" stroke="#f0e2a8" stroke-width="0.6"/><circle cx="512.3" cy="729.2" r="1.1" fill="#6a6a8c"/><circle cx="512.3" cy="742.8" r="1.1" fill="#6a6a8c"/><circle cx="512.3" cy="756.5" r="1.1" fill="#6a6a8c"/><circle cx="525.6" cy="729.2" r="1.1" fill="#6a6a8c"/><circle cx="525.6" cy="742.8" r="1.1" fill="#6a6a8c"/><circle cx="525.6" cy="756.5" r="1.1" fill="#6a6a8c"/><circle cx="539.4" cy="729.2" r="1.1" fill="#6a6a8c"/><circle cx="539.4" cy="742.8" r="1.1" fill="#6a6a8c"/><circle cx="539.4" cy="756.5" r="1.1" fill="#6a6a8c"/><circle cx="553" cy="729.2" r="1.1" fill="#6a6a8c"/><circle cx="553" cy="742.8" r="1.1" fill="#6a6a8c"/><circle cx="553" cy="756.5" r="1.1" fill="#6a6a8c"/><rect x="490.5" y="772" width="4.6" height="13.4" rx="2.3" fill="url(#cu)" stroke="#f3e7b5" stroke-width="0.6"/><rect x="496.77" y="772" width="4.6" height="13.4" rx="2.3" fill="url(#cu)" stroke="#f3e7b5" stroke-width="0.6"/><rect x="503.04" y="772" width="4.6" height="13.4" rx="2.3" fill="url(#cu)" stroke="#f3e7b5" stroke-width="0.6"/><rect x="509.31" y="772" width="4.6" height="13.4" rx="2.3" fill="url(#cu)" stroke="#f3e7b5" stroke-width="0.6"/><rect x="515.58" y="772" width="4.6" height="13.4" rx="2.3" fill="url(#cu)" stroke="#f3e7b5" stroke-width="0.6"/><rect x="521.85" y="772" width="4.6" height="13.4" rx="2.3" fill="url(#cu)" stroke="#f3e7b5" stroke-width="0.6"/><rect x="528.12" y="772" width="4.6" height="13.4" rx="2.3" fill="url(#cu)" stroke="#f3e7b5" stroke-width="0.6"/><rect x="534.39" y="772" width="4.6" height="13.4" rx="2.3" fill="url(#cu)" stroke="#f3e7b5" stroke-width="0.6"/><rect x="540.66" y="772" width="4.6" height="13.4" rx="2.3" fill="url(#cu)" stroke="#f3e7b5" stroke-width="0.6"/><rect x="546.93" y="772" width="4.6" height="13.4" rx="2.3" fill="url(#cu)" stroke="#f3e7b5" stroke-width="0.6"/><rect x="553.2" y="772" width="4.6" height="13.4" rx="2.3" fill="url(#cu)" stroke="#f3e7b5" stroke-width="0.6"/><rect x="559.47" y="772" width="4.6" height="13.4" rx="2.3" fill="url(#cu)" stroke="#f3e7b5" stroke-width="0.6"/><rect x="565.74" y="772" width="4.6" height="13.4" rx="2.3" fill="url(#cu)" stroke="#f3e7b5" stroke-width="0.6"/><rect x="572.01" y="772" width="4.6" height="13.4" rx="2.3" fill="url(#cu)" stroke="#f3e7b5" stroke-width="0.6"/><rect x="575.2" y="718.1" width="14" height="4.2" rx="2.1" fill="url(#cug)" stroke="#f3e7b5" stroke-width="0.6"/><rect x="575.2" y="724.25" width="14" height="4.2" rx="2.1" fill="url(#cug)" stroke="#f3e7b5" stroke-width="0.6"/><rect x="575.2" y="730.4" width="14" height="4.2" rx="2.1" fill="url(#cug)" stroke="#f3e7b5" stroke-width="0.6"/><rect x="575.2" y="736.5500000000001" width="14" height="4.2" rx="2.1" fill="url(#cug)" stroke="#f3e7b5" stroke-width="0.6"/><rect x="575.2" y="742.7" width="14" height="4.2" rx="2.1" fill="url(#cug)" stroke="#f3e7b5" stroke-width="0.6"/><rect x="575.2" y="748.85" width="14" height="4.2" rx="2.1" fill="url(#cug)" stroke="#f3e7b5" stroke-width="0.6"/><rect x="575.2" y="755.0" width="14" height="4.2" rx="2.1" fill="url(#cug)" stroke="#f3e7b5" stroke-width="0.6"/><rect x="575.2" y="761.15" width="14" height="4.2" rx="2.1" fill="url(#cug)" stroke="#f3e7b5" stroke-width="0.6"/><rect x="575.2" y="767.3000000000001" width="14" height="4.2" rx="2.1" fill="url(#cug)" stroke="#f3e7b5" stroke-width="0.6"/><path d="M467 779V788.6M479.7 775V790M479.7 781H487.5" stroke="#e6e9ec" stroke-width="1.5" fill="none"/><rect x="473" y="780" width="2.6" height="2.4" rx="0" fill="url(#cu)"/><rect x="473" y="784" width="2.6" height="2.4" rx="0" fill="url(#cu)"/><path d="M585 774.5V781.3H578" stroke="#e6e9ec" stroke-width="1.5" fill="none"/><circle cx="423.4" cy="792" r="2.4" fill="#eef0f2"/><circle cx="593" cy="779.5" r="2.4" fill="#e8ebee"/><rect x="431" y="787" width="10.4" height="10" rx="0" fill="#e5b82d"/><rect x="450" y="787" width="10" height="10" rx="0" fill="#e5b82d"/><path d="M434 802H457M483 802H500.6M568 800.8H585" stroke="#eef0f2" stroke-width="1.8"/><rect x="484" y="791" width="6.5" height="6" rx="0" fill="#e5b82d"/><rect x="492.8" y="791" width="7.2" height="6" rx="0" fill="#e5b82d"/><rect x="569" y="789" width="6" height="6" rx="0" fill="#e5b82d"/><rect x="577.5" y="789" width="7" height="6" rx="0" fill="#e5b82d"/><path d="M592.3 760V770.6M610.3 760V770.6M603.75 780V794M621.25 780V794" stroke="#e6e9ec" stroke-width="1.6"/><rect x="597.8" y="758" width="7" height="6.3" rx="0" fill="#e0b22d"/><rect x="597.8" y="770.6" width="7" height="6.2" rx="0" fill="#e0b22d"/><rect x="608.75" y="777.6" width="7.7" height="6.3" rx="0" fill="#e5b82d"/><rect x="608.75" y="790" width="7.7" height="7" rx="0" fill="#e5b82d"/><path d="M626.7 780.8H653.3M626.7 803.4H653.3" stroke="#eef0f2" stroke-width="1.8"/><rect x="626.7" y="787" width="7.8" height="11" rx="0" fill="#e5b82d"/><rect x="644.7" y="787" width="7.8" height="11" rx="0" fill="#e5b82d"/><rect x="618" y="724" width="23" height="17.5" rx="0" fill="url(#cu)" stroke="#f3e7b5" stroke-width="0.6"/><rect x="618" y="755.4" width="23" height="17.2" rx="0" fill="url(#cu)" stroke="#f3e7b5" stroke-width="0.6"/><circle cx="658.8" cy="748.2" r="14.3" fill="none" stroke="url(#cu)" stroke-width="7.8"/><circle cx="658.8" cy="748.2" r="18.1" fill="none" stroke="#efe2a8" stroke-width="0.6"/><circle cx="658.8" cy="748.2" r="10.5" fill="#000"/><text x="392.5" y="745" font-family="Liberation Sans, sans-serif" font-size="14" fill="#e2e6ea" textLength="19" lengthAdjust="spacingAndGlyphs">C9</text><text x="446.5" y="760.5" font-family="Liberation Sans, sans-serif" font-size="14" fill="#e2e6ea" textLength="26" lengthAdjust="spacingAndGlyphs">C12</text><text x="402.5" y="798" font-family="Liberation Sans, sans-serif" font-size="14" fill="#e2e6ea" textLength="15" lengthAdjust="spacingAndGlyphs">D1</text><text x="462.5" y="810" font-family="Liberation Sans, sans-serif" font-size="14" fill="#e2e6ea" textLength="18" lengthAdjust="spacingAndGlyphs">R5</text><text x="506" y="802" font-family="Liberation Sans, sans-serif" font-size="14" fill="#e2e6ea" textLength="19" lengthAdjust="spacingAndGlyphs">C3</text><text x="547.5" y="801.5" font-family="Liberation Sans, sans-serif" font-size="14" fill="#e2e6ea" textLength="19" lengthAdjust="spacingAndGlyphs">C2</text><text x="605" y="810.5" font-family="Liberation Sans, sans-serif" font-size="14" fill="#e2e6ea" textLength="13" lengthAdjust="spacingAndGlyphs">R1</text><text x="658.5" y="799.5" font-family="Liberation Sans, sans-serif" font-size="14" fill="#e2e6ea" textLength="18" lengthAdjust="spacingAndGlyphs">R4</text><text x="0" y="0" font-family="Liberation Sans, sans-serif" font-size="14" fill="#e2e6ea" textLength="18" lengthAdjust="spacingAndGlyphs" transform="translate(608.5 755.5) rotate(-90)">R2</text></svg></div>
<div id="win">
<div class="btn" style="left:5px;top:6px;width:59px;height:13px;line-height:11px;padding-left:1px"><b style="font-size:9px;color:#f0f0f0;position:relative;top:1px">+</b>&nbsp; <x>A</x>dd<z> </z><x>V</x>ariant</div>
<div class="a" style="left:75.5px;top:6px;width:14px;height:13px;background:#424242;border-radius:2px;box-shadow:inset 0 0 0 0.6px #383838"><svg width="14" height="13" viewBox="0 0 14 13" style="position:absolute;left:0;top:0"><path d="M4 9.7L9.8 3.8" stroke="#8a8a8a" stroke-width="1.6" stroke-linecap="round"/></svg></div>
<div class="a" style="left:96px;top:6px;width:13px;height:13px;background:#424242;border-radius:2px;box-shadow:inset 0 0 0 0.6px #383838"><svg width="13" height="13" viewBox="0 0 13 13" style="position:absolute;left:0;top:0"><path d="M5.3 2.9h2.4" stroke="#777" stroke-width="1"/><path d="M4.3 3.8h4.4" stroke="#777" stroke-width="1"/><path d="M4.4 4.6h4.2v4.8h-4.2z" fill="#6e6e6e"/></svg></div>
<div class="a" style="left:381px;top:6px;width:83.5px;height:13.2px;background:#4d87b1"></div>
<div class="t" style="left:405px;top:8.7px;color:#e8eef4"><x>V</x>ariants<y>:</y><z> </z><x>36</x></div>
<div class="a" style="left:464.5px;top:6px;width:82.5px;height:13.2px;background:#4b4b4b;border-radius:0 2px 2px 0"></div>
<div class="t" style="left:491.5px;top:8.7px"><x>G</x>roups<y>:</y><z> </z><x>6</x></div>
<div class="a" style="left:740.5px;top:6.7px;width:9.5px;height:9px;background:#4a4a4a;border:1px solid #2c2c2c;border-radius:2px"></div>
<div class="t" style="left:753px;top:7.4px"><x>C</x>hanged<z> </z><x>O</x>nly</div>
<div class="a" style="left:803px;top:5.5px;width:122px;height:11px;background:#2b2b2b;border-radius:3px"></div>
<svg class="a" style="left:807px;top:7.5px" width="8" height="8" viewBox="0 0 8 8"><circle cx="3.2" cy="3.2" r="2.3" fill="none" stroke="#cfcfcf" stroke-width="0.9"/><path d="M4.9 4.9L7.2 7.2" stroke="#cfcfcf" stroke-width="1"/></svg>
<div class="t" style="left:819px;top:6.7px;letter-spacing:-0.4px">Search</div>
<div id="tbl">
<div class="hdr"></div>
<div class="t" style="left:2.6px;top:0.8px;color:#cdcdcd"><x>C</x>omponent<z> </z><y>/</y><z> </z><x>G</x>roup</div>
<div class="vl" style="left:181.3px;top:2px;height:8px;background:#262626"></div>
<svg class="a" style="left:186.8px;top:1.3px" width="9.6" height="7.2" viewBox="0 0 9.6 7.2"><rect x="0" y="0" width="9.6" height="6" fill="#22c484"/><rect x="5.5" y="5.5" width="4.1" height="1.7" fill="#52d89c"/><rect x="2" y="2.2" width="1.3" height="1.3" fill="#b07a50"/><rect x="6" y="2.2" width="1.3" height="1.3" fill="#b07a50"/></svg>
<div class="t" style="left:199.5px;top:0.8px;color:#d4d4d4"><x>A0B1C0D0E4F0</x></div>
<div class="vl" style="left:303.3px;top:2px;height:8px;background:#262626"></div>
<svg class="a" style="left:308.8px;top:1.3px" width="9.6" height="7.2" viewBox="0 0 9.6 7.2"><rect x="0" y="0" width="9.6" height="6" fill="#22c484"/><rect x="5.5" y="5.5" width="4.1" height="1.7" fill="#52d89c"/><rect x="2" y="2.2" width="1.3" height="1.3" fill="#b07a50"/><rect x="6" y="2.2" width="1.3" height="1.3" fill="#b07a50"/></svg>
<div class="t" style="left:321.5px;top:0.8px;color:#d4d4d4"><x>A1B1C0D0E4F0</x></div>
<div class="vl" style="left:425.3px;top:2px;height:8px;background:#262626"></div>
<svg class="a" style="left:430.8px;top:1.3px" width="9.6" height="7.2" viewBox="0 0 9.6 7.2"><rect x="0" y="0" width="9.6" height="6" fill="#22c484"/><rect x="5.5" y="5.5" width="4.1" height="1.7" fill="#52d89c"/><rect x="2" y="2.2" width="1.3" height="1.3" fill="#b07a50"/><rect x="6" y="2.2" width="1.3" height="1.3" fill="#b07a50"/></svg>
<div class="t" style="left:443.5px;top:0.8px;color:#d4d4d4"><x>A2B1C0D0E4F0</x></div>
<div class="vl" style="left:547.3px;top:2px;height:8px;background:#262626"></div>
<svg class="a" style="left:552.8px;top:1.3px" width="9.6" height="7.2" viewBox="0 0 9.6 7.2"><rect x="0" y="0" width="9.6" height="6" fill="#22c484"/><rect x="5.5" y="5.5" width="4.1" height="1.7" fill="#52d89c"/><rect x="2" y="2.2" width="1.3" height="1.3" fill="#b07a50"/><rect x="6" y="2.2" width="1.3" height="1.3" fill="#b07a50"/></svg>
<div class="t" style="left:565.5px;top:0.8px;color:#d4d4d4"><x>A0B1C0D0E8F0</x></div>
<div class="vl" style="left:669.3px;top:2px;height:8px;background:#262626"></div>
<svg class="a" style="left:674.8px;top:1.3px" width="9.6" height="7.2" viewBox="0 0 9.6 7.2"><rect x="0" y="0" width="9.6" height="6" fill="#22c484"/><rect x="5.5" y="5.5" width="4.1" height="1.7" fill="#52d89c"/><rect x="2" y="2.2" width="1.3" height="1.3" fill="#b07a50"/><rect x="6" y="2.2" width="1.3" height="1.3" fill="#b07a50"/></svg>
<div class="t" style="left:687.5px;top:0.8px;color:#d4d4d4"><x>A1B1C0D0E8F0</x></div>
<div class="vl" style="left:791.3px;top:2px;height:8px;background:#262626"></div>
<svg class="a" style="left:796.8px;top:1.3px" width="9.6" height="7.2" viewBox="0 0 9.6 7.2"><rect x="0" y="0" width="9.6" height="6" fill="#22c484"/><rect x="5.5" y="5.5" width="4.1" height="1.7" fill="#52d89c"/><rect x="2" y="2.2" width="1.3" height="1.3" fill="#b07a50"/><rect x="6" y="2.2" width="1.3" height="1.3" fill="#b07a50"/></svg>
<div class="t" style="left:809.5px;top:0.8px;color:#d4d4d4"><x>A2B1C0D0E8F0</x></div>
<div class="vl" style="left:127px;top:2px;height:8px;background:#262626"></div>
<div class="rl" style="top:22.79px"></div>
<svg class="tr" style="left:5.3px;top:16.60px" width="3.2" height="2.6" viewBox="0 0 4 3"><path d="M0 0h4l-2 3z" fill="#d6d6d6"/></svg>
<svg class="fo" style="left:12px;top:13.80px" width="8.6" height="7.4" viewBox="0 0 9 8"><path d="M0 0.5h3.5l1 1h4.5v6.5h-9z" fill="#dcb666"/><path d="M0 2.5h9v5.5h-9z" fill="#f0d08a"/></svg>
<div class="t" style="left:24.2px;top:13.97px"><x>F</x>x<z> </z><y>(</y><x>PCIE</x><z> </z><x>G</x>en<x>3</x><y>)</y></div>
<div class="t" style="left:185.1px;top:13.97px;color:#dedede"><x>F0</x><z> </z><y>(</y>no<z> </z><x>PCIE</x><z> </z><x>G</x>en<x>3</x><y>)</y></div>
<svg class="tr" style="left:295.1px;top:17.30px" width="4.3" height="2.7" viewBox="0 0 6 4"><path d="M0 0h6l-3 4z" fill="#f0f0f0"/></svg>
<div class="t" style="left:307.1px;top:13.97px;color:#dedede"><x>F0</x><z> </z><y>(</y>no<z> </z><x>PCIE</x><z> </z><x>G</x>en<x>3</x><y>)</y></div>
<svg class="tr" style="left:417.1px;top:17.30px" width="4.3" height="2.7" viewBox="0 0 6 4"><path d="M0 0h6l-3 4z" fill="#f0f0f0"/></svg>
<div class="t" style="left:429.1px;top:13.97px;color:#dedede"><x>F0</x><z> </z><y>(</y>no<z> </z><x>PCIE</x><z> </z><x>G</x>en<x>3</x><y>)</y></div>
<svg class="tr" style="left:539.1px;top:17.30px" width="4.3" height="2.7" viewBox="0 0 6 4"><path d="M0 0h6l-3 4z" fill="#f0f0f0"/></svg>
<div class="t" style="left:551.1px;top:13.97px;color:#dedede"><x>F0</x><z> </z><y>(</y>no<z> </z><x>PCIE</x><z> </z><x>G</x>en<x>3</x><y>)</y></div>
<svg class="tr" style="left:661.1px;top:17.30px" width="4.3" height="2.7" viewBox="0 0 6 4"><path d="M0 0h6l-3 4z" fill="#f0f0f0"/></svg>
<div class="t" style="left:673.1px;top:13.97px;color:#dedede"><x>F0</x><z> </z><y>(</y>no<z> </z><x>PCIE</x><z> </z><x>G</x>en<x>3</x><y>)</y></div>
<svg class="tr" style="left:783.1px;top:17.30px" width="4.3" height="2.7" viewBox="0 0 6 4"><path d="M0 0h6l-3 4z" fill="#f0f0f0"/></svg>
<div class="t" style="left:795.1px;top:13.97px;color:#dedede"><x>F0</x><z> </z><y>(</y>no<z> </z><x>PCIE</x><z> </z><x>G</x>en<x>3</x><y>)</y></div>
<svg class="tr" style="left:905.1px;top:17.30px" width="4.3" height="2.7" viewBox="0 0 6 4"><path d="M0 0h6l-3 4z" fill="#f0f0f0"/></svg>
<div class="rl" style="top:34.99px"></div>
<svg class="ci" style="left:15.8px;top:25.09px" width="10" height="10" viewBox="0 0 10 10"><g stroke="#9a9a9a" stroke-width="0.8"><path d="M0.3 1.5h1.8M0.3 3.4h1.8M0.3 5.5h1.8M0.3 7.5h1.8M7.3 1.5h1.7M7.3 3.4h1.7M7.3 5.5h1.7M7.3 7.5h1.7"/></g><rect x="2.1" y="0" width="5.3" height="9.1" fill="#4f86d8"/><rect x="2.6" y="0.5" width="4.3" height="8.1" fill="#74aaf2"/><path d="M2.9 1.6h3.7" stroke="#9cc4fa" stroke-width="0.6"/></svg>
<div class="t" style="left:27.3px;top:25.96px"><x>C1005X7R1E104M</x></div>
<div class="t" style="left:129.4px;top:25.96px"><x>C482</x></div>
<div class="t nf" style="left:185.1px;top:25.96px"><x>N</x>ot<z> </z><x>F</x>itted</div>
<div class="t nf" style="left:307.1px;top:25.96px"><x>N</x>ot<z> </z><x>F</x>itted</div>
<div class="t nf" style="left:429.1px;top:25.96px"><x>N</x>ot<z> </z><x>F</x>itted</div>
<div class="t nf" style="left:551.1px;top:25.96px"><x>N</x>ot<z> </z><x>F</x>itted</div>
<div class="t nf" style="left:673.1px;top:25.96px"><x>N</x>ot<z> </z><x>F</x>itted</div>
<div class="t nf" style="left:795.1px;top:25.96px"><x>N</x>ot<z> </z><x>F</x>itted</div>
<div class="rl" style="top:47.18px"></div>
<svg class="ci" style="left:15.8px;top:37.29px" width="10" height="10" viewBox="0 0 10 10"><g stroke="#9a9a9a" stroke-width="0.8"><path d="M0.3 1.5h1.8M0.3 3.4h1.8M0.3 5.5h1.8M0.3 7.5h1.8M7.3 1.5h1.7M7.3 3.4h1.7M7.3 5.5h1.7M7.3 7.5h1.7"/></g><rect x="2.1" y="0" width="5.3" height="9.1" fill="#4f86d8"/><rect x="2.6" y="0.5" width="4.3" height="8.1" fill="#74aaf2"/><path d="M2.9 1.6h3.7" stroke="#9cc4fa" stroke-width="0.6"/></svg>
<div class="t" style="left:27.3px;top:38.16px"><x>GRM155R61A224KE19D</x></div>
<div class="t" style="left:129.4px;top:38.16px"><x>C483</x></div>
<div class="t nf" style="left:185.1px;top:38.16px"><x>N</x>ot<z> </z><x>F</x>itted</div>
<div class="t nf" style="left:307.1px;top:38.16px"><x>N</x>ot<z> </z><x>F</x>itted</div>
<div class="t nf" style="left:429.1px;top:38.16px"><x>N</x>ot<z> </z><x>F</x>itted</div>
<div class="t nf" style="left:551.1px;top:38.16px"><x>N</x>ot<z> </z><x>F</x>itted</div>
<div class="t nf" style="left:673.1px;top:38.16px"><x>N</x>ot<z> </z><x>F</x>itted</div>
<div class="t nf" style="left:795.1px;top:38.16px"><x>N</x>ot<z> </z><x>F</x>itted</div>
<div class="rl" style="top:59.37px"></div>
<svg class="ci" style="left:15.8px;top:49.48px" width="10" height="10" viewBox="0 0 10 10"><g stroke="#9a9a9a" stroke-width="0.8"><path d="M0.3 1.5h1.8M0.3 3.4h1.8M0.3 5.5h1.8M0.3 7.5h1.8M7.3 1.5h1.7M7.3 3.4h1.7M7.3 5.5h1.7M7.3 7.5h1.7"/></g><rect x="2.1" y="0" width="5.3" height="9.1" fill="#4f86d8"/><rect x="2.6" y="0.5" width="4.3" height="8.1" fill="#74aaf2"/><path d="M2.9 1.6h3.7" stroke="#9cc4fa" stroke-width="0.6"/></svg>
<div class="t" style="left:27.3px;top:50.35px"><x>GRM155R61A224KE19D</x></div>
<div class="t" style="left:129.4px;top:50.35px"><x>C484</x></div>
<div class="t nf" style="left:185.1px;top:50.35px"><x>N</x>ot<z> </z><x>F</x>itted</div>
<div class="t nf" style="left:307.1px;top:50.35px"><x>N</x>ot<z> </z><x>F</x>itted</div>
<div class="t nf" style="left:429.1px;top:50.35px"><x>N</x>ot<z> </z><x>F</x>itted</div>
<div class="t nf" style="left:551.1px;top:50.35px"><x>N</x>ot<z> </z><x>F</x>itted</div>
<div class="t nf" style="left:673.1px;top:50.35px"><x>N</x>ot<z> </z><x>F</x>itted</div>
<div class="t nf" style="left:795.1px;top:50.35px"><x>N</x>ot<z> </z><x>F</x>itted</div>
<div class="rl" style="top:71.56px"></div>
<svg class="ci" style="left:15.8px;top:61.67px" width="10" height="10" viewBox="0 0 10 10"><g stroke="#9a9a9a" stroke-width="0.8"><path d="M0.3 1.5h1.8M0.3 3.4h1.8M0.3 5.5h1.8M0.3 7.5h1.8M7.3 1.5h1.7M7.3 3.4h1.7M7.3 5.5h1.7M7.3 7.5h1.7"/></g><rect x="2.1" y="0" width="5.3" height="9.1" fill="#4f86d8"/><rect x="2.6" y="0.5" width="4.3" height="8.1" fill="#74aaf2"/><path d="M2.9 1.6h3.7" stroke="#9cc4fa" stroke-width="0.6"/></svg>
<div class="t" style="left:27.3px;top:62.54px"><x>GRM155R61A224KE19D</x></div>
<div class="t" style="left:129.4px;top:62.54px"><x>C485</x></div>
<div class="t nf" style="left:185.1px;top:62.54px"><x>N</x>ot<z> </z><x>F</x>itted</div>
<div class="t nf" style="left:307.1px;top:62.54px"><x>N</x>ot<z> </z><x>F</x>itted</div>
<div class="t nf" style="left:429.1px;top:62.54px"><x>N</x>ot<z> </z><x>F</x>itted</div>
<div class="t nf" style="left:551.1px;top:62.54px"><x>N</x>ot<z> </z><x>F</x>itted</div>
<div class="t nf" style="left:673.1px;top:62.54px"><x>N</x>ot<z> </z><x>F</x>itted</div>
<div class="t nf" style="left:795.1px;top:62.54px"><x>N</x>ot<z> </z><x>F</x>itted</div>
<div class="rl" style="top:83.76px"></div>
<svg class="ci" style="left:15.8px;top:73.87px" width="10" height="10" viewBox="0 0 10 10"><g stroke="#9a9a9a" stroke-width="0.8"><path d="M0.3 1.5h1.8M0.3 3.4h1.8M0.3 5.5h1.8M0.3 7.5h1.8M7.3 1.5h1.7M7.3 3.4h1.7M7.3 5.5h1.7M7.3 7.5h1.7"/></g><rect x="2.1" y="0" width="5.3" height="9.1" fill="#4f86d8"/><rect x="2.6" y="0.5" width="4.3" height="8.1" fill="#74aaf2"/><path d="M2.9 1.6h3.7" stroke="#9cc4fa" stroke-width="0.6"/></svg>
<div class="t" style="left:27.3px;top:74.73px"><x>GRM155R61A224KE19D</x></div>
<div class="t" style="left:129.4px;top:74.73px"><x>C486</x></div>
<div class="t nf" style="left:185.1px;top:74.73px"><x>N</x>ot<z> </z><x>F</x>itted</div>
<div class="t nf" style="left:307.1px;top:74.73px"><x>N</x>ot<z> </z><x>F</x>itted</div>
<div class="t nf" style="left:429.1px;top:74.73px"><x>N</x>ot<z> </z><x>F</x>itted</div>
<div class="t nf" style="left:551.1px;top:74.73px"><x>N</x>ot<z> </z><x>F</x>itted</div>
<div class="t nf" style="left:673.1px;top:74.73px"><x>N</x>ot<z> </z><x>F</x>itted</div>
<div class="t nf" style="left:795.1px;top:74.73px"><x>N</x>ot<z> </z><x>F</x>itted</div>
<div class="rl" style="top:95.95px"></div>
<svg class="ci" style="left:15.8px;top:86.06px" width="10" height="10" viewBox="0 0 10 10"><g stroke="#9a9a9a" stroke-width="0.8"><path d="M0.3 1.5h1.8M0.3 3.4h1.8M0.3 5.5h1.8M0.3 7.5h1.8M7.3 1.5h1.7M7.3 3.4h1.7M7.3 5.5h1.7M7.3 7.5h1.7"/></g><rect x="2.1" y="0" width="5.3" height="9.1" fill="#4f86d8"/><rect x="2.6" y="0.5" width="4.3" height="8.1" fill="#74aaf2"/><path d="M2.9 1.6h3.7" stroke="#9cc4fa" stroke-width="0.6"/></svg>
<div class="t" style="left:27.3px;top:86.93px"><x>GRM155R61A224KE19D</x></div>
<div class="t" style="left:129.4px;top:86.93px"><x>C487</x></div>
<div class="t nf" style="left:185.1px;top:86.93px"><x>N</x>ot<z> </z><x>F</x>itted</div>
<div class="t nf" style="left:307.1px;top:86.93px"><x>N</x>ot<z> </z><x>F</x>itted</div>
<div class="t nf" style="left:429.1px;top:86.93px"><x>N</x>ot<z> </z><x>F</x>itted</div>
<div class="t nf" style="left:551.1px;top:86.93px"><x>N</x>ot<z> </z><x>F</x>itted</div>
<div class="t nf" style="left:673.1px;top:86.93px"><x>N</x>ot<z> </z><x>F</x>itted</div>
<div class="t nf" style="left:795.1px;top:86.93px"><x>N</x>ot<z> </z><x>F</x>itted</div>
<div class="rl" style="top:108.14px"></div>
<svg class="ci" style="left:15.8px;top:98.25px" width="10" height="10" viewBox="0 0 10 10"><g stroke="#9a9a9a" stroke-width="0.8"><path d="M0.3 1.5h1.8M0.3 3.4h1.8M0.3 5.5h1.8M0.3 7.5h1.8M7.3 1.5h1.7M7.3 3.4h1.7M7.3 5.5h1.7M7.3 7.5h1.7"/></g><rect x="2.1" y="0" width="5.3" height="9.1" fill="#4f86d8"/><rect x="2.6" y="0.5" width="4.3" height="8.1" fill="#74aaf2"/><path d="M2.9 1.6h3.7" stroke="#9cc4fa" stroke-width="0.6"/></svg>
<div class="t" style="left:27.3px;top:99.12px"><x>GRM155R61A224KE19D</x></div>
<div class="t" style="left:129.4px;top:99.12px"><x>C488</x></div>
<div class="t nf" style="left:185.1px;top:99.12px"><x>N</x>ot<z> </z><x>F</x>itted</div>
<div class="t nf" style="left:307.1px;top:99.12px"><x>N</x>ot<z> </z><x>F</x>itted</div>
<div class="t nf" style="left:429.1px;top:99.12px"><x>N</x>ot<z> </z><x>F</x>itted</div>
<div class="t nf" style="left:551.1px;top:99.12px"><x>N</x>ot<z> </z><x>F</x>itted</div>
<div class="t nf" style="left:673.1px;top:99.12px"><x>N</x>ot<z> </z><x>F</x>itted</div>
<div class="t nf" style="left:795.1px;top:99.12px"><x>N</x>ot<z> </z><x>F</x>itted</div>
<div class="rl" style="top:120.34px"></div>
<svg class="ci" style="left:15.8px;top:110.44px" width="10" height="10" viewBox="0 0 10 10"><g stroke="#9a9a9a" stroke-width="0.8"><path d="M0.3 1.5h1.8M0.3 3.4h1.8M0.3 5.5h1.8M0.3 7.5h1.8M7.3 1.5h1.7M7.3 3.4h1.7M7.3 5.5h1.7M7.3 7.5h1.7"/></g><rect x="2.1" y="0" width="5.3" height="9.1" fill="#4f86d8"/><rect x="2.6" y="0.5" width="4.3" height="8.1" fill="#74aaf2"/><path d="M2.9 1.6h3.7" stroke="#9cc4fa" stroke-width="0.6"/></svg>
<div class="t" style="left:27.3px;top:111.31px"><x>GRM155R61A224KE19D</x></div>
<div class="t" style="left:129.4px;top:111.31px"><x>C490</x></div>
<div class="t nf" style="left:185.1px;top:111.31px"><x>N</x>ot<z> </z><x>F</x>itted</div>
<div class="t nf" style="left:307.1px;top:111.31px"><x>N</x>ot<z> </z><x>F</x>itted</div>
<div class="t nf" style="left:429.1px;top:111.31px"><x>N</x>ot<z> </z><x>F</x>itted</div>
<div class="t nf" style="left:551.1px;top:111.31px"><x>N</x>ot<z> </z><x>F</x>itted</div>
<div class="t nf" style="left:673.1px;top:111.31px"><x>N</x>ot<z> </z><x>F</x>itted</div>
<div class="t nf" style="left:795.1px;top:111.31px"><x>N</x>ot<z> </z><x>F</x>itted</div>
<div class="rl" style="top:132.53px"></div>
<svg class="ci" style="left:15.8px;top:122.64px" width="10" height="10" viewBox="0 0 10 10"><g stroke="#9a9a9a" stroke-width="0.8"><path d="M0.3 1.5h1.8M0.3 3.4h1.8M0.3 5.5h1.8M0.3 7.5h1.8M7.3 1.5h1.7M7.3 3.4h1.7M7.3 5.5h1.7M7.3 7.5h1.7"/></g><rect x="2.1" y="0" width="5.3" height="9.1" fill="#4f86d8"/><rect x="2.6" y="0.5" width="4.3" height="8.1" fill="#74aaf2"/><path d="M2.9 1.6h3.7" stroke="#9cc4fa" stroke-width="0.6"/></svg>
<div class="t" style="left:27.3px;top:123.51px"><x>GRM155R61A224KE19D</x></div>
<div class="t" style="left:129.4px;top:123.51px"><x>C491</x></div>
<div class="t nf" style="left:185.1px;top:123.51px"><x>N</x>ot<z> </z><x>F</x>itted</div>
<div class="t nf" style="left:307.1px;top:123.51px"><x>N</x>ot<z> </z><x>F</x>itted</div>
<div class="t nf" style="left:429.1px;top:123.51px"><x>N</x>ot<z> </z><x>F</x>itted</div>
<div class="t nf" style="left:551.1px;top:123.51px"><x>N</x>ot<z> </z><x>F</x>itted</div>
<div class="t nf" style="left:673.1px;top:123.51px"><x>N</x>ot<z> </z><x>F</x>itted</div>
<div class="t nf" style="left:795.1px;top:123.51px"><x>N</x>ot<z> </z><x>F</x>itted</div>
<div class="rl" style="top:144.72px"></div>
<svg class="ci" style="left:15.8px;top:134.83px" width="10" height="10" viewBox="0 0 10 10"><g stroke="#9a9a9a" stroke-width="0.8"><path d="M0.3 1.5h1.8M0.3 3.4h1.8M0.3 5.5h1.8M0.3 7.5h1.8M7.3 1.5h1.7M7.3 3.4h1.7M7.3 5.5h1.7M7.3 7.5h1.7"/></g><rect x="2.1" y="0" width="5.3" height="9.1" fill="#4f86d8"/><rect x="2.6" y="0.5" width="4.3" height="8.1" fill="#74aaf2"/><path d="M2.9 1.6h3.7" stroke="#9cc4fa" stroke-width="0.6"/></svg>
<div class="t" style="left:27.3px;top:135.70px"><x>GRM155R61A224KE19D</x></div>
<div class="t" style="left:129.4px;top:135.70px"><x>C492</x></div>
<div class="t nf" style="left:185.1px;top:135.70px"><x>N</x>ot<z> </z><x>F</x>itted</div>
<div class="t nf" style="left:307.1px;top:135.70px"><x>N</x>ot<z> </z><x>F</x>itted</div>
<div class="t nf" style="left:429.1px;top:135.70px"><x>N</x>ot<z> </z><x>F</x>itted</div>
<div class="t nf" style="left:551.1px;top:135.70px"><x>N</x>ot<z> </z><x>F</x>itted</div>
<div class="t nf" style="left:673.1px;top:135.70px"><x>N</x>ot<z> </z><x>F</x>itted</div>
<div class="t nf" style="left:795.1px;top:135.70px"><x>N</x>ot<z> </z><x>F</x>itted</div>
<div class="rl" style="top:156.92px"></div>
<svg class="ci" style="left:15.8px;top:147.02px" width="10" height="10" viewBox="0 0 10 10"><g stroke="#9a9a9a" stroke-width="0.8"><path d="M0.3 1.5h1.8M0.3 3.4h1.8M0.3 5.5h1.8M0.3 7.5h1.8M7.3 1.5h1.7M7.3 3.4h1.7M7.3 5.5h1.7M7.3 7.5h1.7"/></g><rect x="2.1" y="0" width="5.3" height="9.1" fill="#4f86d8"/><rect x="2.6" y="0.5" width="4.3" height="8.1" fill="#74aaf2"/><path d="M2.9 1.6h3.7" stroke="#9cc4fa" stroke-width="0.6"/></svg>
<div class="t" style="left:27.3px;top:147.89px"><x>GRM155R61A224KE19D</x></div>
<div class="t" style="left:129.4px;top:147.89px"><x>C493</x></div>
<div class="t nf" style="left:185.1px;top:147.89px"><x>N</x>ot<z> </z><x>F</x>itted</div>
<div class="t nf" style="left:307.1px;top:147.89px"><x>N</x>ot<z> </z><x>F</x>itted</div>
<div class="t nf" style="left:429.1px;top:147.89px"><x>N</x>ot<z> </z><x>F</x>itted</div>
<div class="t nf" style="left:551.1px;top:147.89px"><x>N</x>ot<z> </z><x>F</x>itted</div>
<div class="t nf" style="left:673.1px;top:147.89px"><x>N</x>ot<z> </z><x>F</x>itted</div>
<div class="t nf" style="left:795.1px;top:147.89px"><x>N</x>ot<z> </z><x>F</x>itted</div>
<div class="rl" style="top:169.11px"></div>
<svg class="ci" style="left:15.8px;top:159.22px" width="10" height="10" viewBox="0 0 10 10"><g stroke="#9a9a9a" stroke-width="0.8"><path d="M0.3 1.5h1.8M0.3 3.4h1.8M0.3 5.5h1.8M0.3 7.5h1.8M7.3 1.5h1.7M7.3 3.4h1.7M7.3 5.5h1.7M7.3 7.5h1.7"/></g><rect x="2.1" y="0" width="5.3" height="9.1" fill="#4f86d8"/><rect x="2.6" y="0.5" width="4.3" height="8.1" fill="#74aaf2"/><path d="M2.9 1.6h3.7" stroke="#9cc4fa" stroke-width="0.6"/></svg>
<div class="t" style="left:27.3px;top:160.09px"><x>GRM155R61A224KE19D</x></div>
<div class="t" style="left:129.4px;top:160.09px"><x>C494</x></div>
<div class="t nf" style="left:185.1px;top:160.09px"><x>N</x>ot<z> </z><x>F</x>itted</div>
<div class="t nf" style="left:307.1px;top:160.09px"><x>N</x>ot<z> </z><x>F</x>itted</div>
<div class="t nf" style="left:429.1px;top:160.09px"><x>N</x>ot<z> </z><x>F</x>itted</div>
<div class="t nf" style="left:551.1px;top:160.09px"><x>N</x>ot<z> </z><x>F</x>itted</div>
<div class="t nf" style="left:673.1px;top:160.09px"><x>N</x>ot<z> </z><x>F</x>itted</div>
<div class="t nf" style="left:795.1px;top:160.09px"><x>N</x>ot<z> </z><x>F</x>itted</div>
<div class="rl" style="top:181.30px"></div>
<svg class="ci" style="left:15.8px;top:171.41px" width="10" height="10" viewBox="0 0 10 10"><g stroke="#9a9a9a" stroke-width="0.8"><path d="M0.3 1.5h1.8M0.3 3.4h1.8M0.3 5.5h1.8M0.3 7.5h1.8M7.3 1.5h1.7M7.3 3.4h1.7M7.3 5.5h1.7M7.3 7.5h1.7"/></g><rect x="2.1" y="0" width="5.3" height="9.1" fill="#4f86d8"/><rect x="2.6" y="0.5" width="4.3" height="8.1" fill="#74aaf2"/><path d="M2.9 1.6h3.7" stroke="#9cc4fa" stroke-width="0.6"/></svg>
<div class="t" style="left:27.3px;top:172.28px"><x>GRM155R61A224KE19D</x></div>
<div class="t" style="left:129.4px;top:172.28px"><x>C495</x></div>
<div class="t nf" style="left:185.1px;top:172.28px"><x>N</x>ot<z> </z><x>F</x>itted</div>
<div class="t nf" style="left:307.1px;top:172.28px"><x>N</x>ot<z> </z><x>F</x>itted</div>
<div class="t nf" style="left:429.1px;top:172.28px"><x>N</x>ot<z> </z><x>F</x>itted</div>
<div class="t nf" style="left:551.1px;top:172.28px"><x>N</x>ot<z> </z><x>F</x>itted</div>
<div class="t nf" style="left:673.1px;top:172.28px"><x>N</x>ot<z> </z><x>F</x>itted</div>
<div class="t nf" style="left:795.1px;top:172.28px"><x>N</x>ot<z> </z><x>F</x>itted</div>
<div class="rl" style="top:193.49px"></div>
<svg class="ci" style="left:15.8px;top:183.60px" width="10" height="10" viewBox="0 0 10 10"><g stroke="#9a9a9a" stroke-width="0.8"><path d="M0.3 1.5h1.8M0.3 3.4h1.8M0.3 5.5h1.8M0.3 7.5h1.8M7.3 1.5h1.7M7.3 3.4h1.7M7.3 5.5h1.7M7.3 7.5h1.7"/></g><rect x="2.1" y="0" width="5.3" height="9.1" fill="#4f86d8"/><rect x="2.6" y="0.5" width="4.3" height="8.1" fill="#74aaf2"/><path d="M2.9 1.6h3.7" stroke="#9cc4fa" stroke-width="0.6"/></svg>
<div class="t" style="left:27.3px;top:184.47px"><x>GRM155R61A224KE19D</x></div>
<div class="t" style="left:129.4px;top:184.47px"><x>C496</x></div>
<div class="t nf" style="left:185.1px;top:184.47px"><x>N</x>ot<z> </z><x>F</x>itted</div>
<div class="t nf" style="left:307.1px;top:184.47px"><x>N</x>ot<z> </z><x>F</x>itted</div>
<div class="t nf" style="left:429.1px;top:184.47px"><x>N</x>ot<z> </z><x>F</x>itted</div>
<div class="t nf" style="left:551.1px;top:184.47px"><x>N</x>ot<z> </z><x>F</x>itted</div>
<div class="t nf" style="left:673.1px;top:184.47px"><x>N</x>ot<z> </z><x>F</x>itted</div>
<div class="t nf" style="left:795.1px;top:184.47px"><x>N</x>ot<z> </z><x>F</x>itted</div>
<div class="rl" style="top:205.69px"></div>
<svg class="ci" style="left:15.8px;top:195.79px" width="10" height="10" viewBox="0 0 10 10"><g stroke="#9a9a9a" stroke-width="0.8"><path d="M0.3 1.5h1.8M0.3 3.4h1.8M0.3 5.5h1.8M0.3 7.5h1.8M7.3 1.5h1.7M7.3 3.4h1.7M7.3 5.5h1.7M7.3 7.5h1.7"/></g><rect x="2.1" y="0" width="5.3" height="9.1" fill="#4f86d8"/><rect x="2.6" y="0.5" width="4.3" height="8.1" fill="#74aaf2"/><path d="M2.9 1.6h3.7" stroke="#9cc4fa" stroke-width="0.6"/></svg>
<div class="t" style="left:27.3px;top:196.66px"><x>GRM155R61A224KE19D</x></div>
<div class="t" style="left:129.4px;top:196.66px"><x>C497</x></div>
<div class="t nf" style="left:185.1px;top:196.66px"><x>N</x>ot<z> </z><x>F</x>itted</div>
<div class="t nf" style="left:307.1px;top:196.66px"><x>N</x>ot<z> </z><x>F</x>itted</div>
<div class="t nf" style="left:429.1px;top:196.66px"><x>N</x>ot<z> </z><x>F</x>itted</div>
<div class="t nf" style="left:551.1px;top:196.66px"><x>N</x>ot<z> </z><x>F</x>itted</div>
<div class="t nf" style="left:673.1px;top:196.66px"><x>N</x>ot<z> </z><x>F</x>itted</div>
<div class="t nf" style="left:795.1px;top:196.66px"><x>N</x>ot<z> </z><x>F</x>itted</div>
<div class="rl" style="top:217.88px"></div>
<svg class="ci" style="left:15.8px;top:207.99px" width="10" height="10" viewBox="0 0 10 10"><g stroke="#9a9a9a" stroke-width="0.8"><path d="M0.3 1.5h1.8M0.3 3.4h1.8M0.3 5.5h1.8M0.3 7.5h1.8M7.3 1.5h1.7M7.3 3.4h1.7M7.3 5.5h1.7M7.3 7.5h1.7"/></g><rect x="2.1" y="0" width="5.3" height="9.1" fill="#4f86d8"/><rect x="2.6" y="0.5" width="4.3" height="8.1" fill="#74aaf2"/><path d="M2.9 1.6h3.7" stroke="#9cc4fa" stroke-width="0.6"/></svg>
<div class="t" style="left:27.3px;top:208.86px"><x>GRM155R61A224KE19D</x></div>
<div class="t" style="left:129.4px;top:208.86px"><x>C498</x></div>
<div class="t nf" style="left:185.1px;top:208.86px"><x>N</x>ot<z> </z><x>F</x>itted</div>
<div class="t nf" style="left:307.1px;top:208.86px"><x>N</x>ot<z> </z><x>F</x>itted</div>
<div class="t nf" style="left:429.1px;top:208.86px"><x>N</x>ot<z> </z><x>F</x>itted</div>
<div class="t nf" style="left:551.1px;top:208.86px"><x>N</x>ot<z> </z><x>F</x>itted</div>
<div class="t nf" style="left:673.1px;top:208.86px"><x>N</x>ot<z> </z><x>F</x>itted</div>
<div class="t nf" style="left:795.1px;top:208.86px"><x>N</x>ot<z> </z><x>F</x>itted</div>
<div class="rl" style="top:230.07px"></div>
<svg class="ci" style="left:15.8px;top:220.18px" width="10" height="10" viewBox="0 0 10 10"><g stroke="#9a9a9a" stroke-width="0.8"><path d="M0.3 1.5h1.8M0.3 3.4h1.8M0.3 5.5h1.8M0.3 7.5h1.8M7.3 1.5h1.7M7.3 3.4h1.7M7.3 5.5h1.7M7.3 7.5h1.7"/></g><rect x="2.1" y="0" width="5.3" height="9.1" fill="#4f86d8"/><rect x="2.6" y="0.5" width="4.3" height="8.1" fill="#74aaf2"/><path d="M2.9 1.6h3.7" stroke="#9cc4fa" stroke-width="0.6"/></svg>
<div class="t" style="left:27.3px;top:221.05px"><x>GRM155R61A224KE19D</x></div>
<div class="t" style="left:129.4px;top:221.05px"><x>C499</x></div>
<div class="t nf" style="left:185.1px;top:221.05px"><x>N</x>ot<z> </z><x>F</x>itted</div>
<div class="t nf" style="left:307.1px;top:221.05px"><x>N</x>ot<z> </z><x>F</x>itted</div>
<div class="t nf" style="left:429.1px;top:221.05px"><x>N</x>ot<z> </z><x>F</x>itted</div>
<div class="t nf" style="left:551.1px;top:221.05px"><x>N</x>ot<z> </z><x>F</x>itted</div>
<div class="t nf" style="left:673.1px;top:221.05px"><x>N</x>ot<z> </z><x>F</x>itted</div>
<div class="t nf" style="left:795.1px;top:221.05px"><x>N</x>ot<z> </z><x>F</x>itted</div>
<div class="rl" style="top:242.27px"></div>
<svg class="ci" style="left:15.8px;top:232.37px" width="10" height="10" viewBox="0 0 10 10"><g stroke="#9a9a9a" stroke-width="0.8"><path d="M0.3 1.5h1.8M0.3 3.4h1.8M0.3 5.5h1.8M0.3 7.5h1.8M7.3 1.5h1.7M7.3 3.4h1.7M7.3 5.5h1.7M7.3 7.5h1.7"/></g><rect x="2.1" y="0" width="5.3" height="9.1" fill="#4f86d8"/><rect x="2.6" y="0.5" width="4.3" height="8.1" fill="#74aaf2"/><path d="M2.9 1.6h3.7" stroke="#9cc4fa" stroke-width="0.6"/></svg>
<div class="t" style="left:27.3px;top:233.24px"><x>GRM31CR61E226KE15L</x></div>
<div class="t" style="left:129.4px;top:233.24px"><x>C500</x></div>
<div class="t nf" style="left:185.1px;top:233.24px"><x>N</x>ot<z> </z><x>F</x>itted</div>
<div class="t nf" style="left:307.1px;top:233.24px"><x>N</x>ot<z> </z><x>F</x>itted</div>
<div class="t nf" style="left:429.1px;top:233.24px"><x>N</x>ot<z> </z><x>F</x>itted</div>
<div class="t nf" style="left:551.1px;top:233.24px"><x>N</x>ot<z> </z><x>F</x>itted</div>
<div class="t nf" style="left:673.1px;top:233.24px"><x>N</x>ot<z> </z><x>F</x>itted</div>
<div class="t nf" style="left:795.1px;top:233.24px"><x>N</x>ot<z> </z><x>F</x>itted</div>
<div class="rl" style="top:254.46px"></div>
<svg class="ci" style="left:15.8px;top:244.57px" width="10" height="10" viewBox="0 0 10 10"><g stroke="#9a9a9a" stroke-width="0.8"><path d="M0.3 1.5h1.8M0.3 3.4h1.8M0.3 5.5h1.8M0.3 7.5h1.8M7.3 1.5h1.7M7.3 3.4h1.7M7.3 5.5h1.7M7.3 7.5h1.7"/></g><rect x="2.1" y="0" width="5.3" height="9.1" fill="#4f86d8"/><rect x="2.6" y="0.5" width="4.3" height="8.1" fill="#74aaf2"/><path d="M2.9 1.6h3.7" stroke="#9cc4fa" stroke-width="0.6"/></svg>
<div class="t" style="left:27.3px;top:245.44px"><x>C1005X7R1E104M</x></div>
<div class="t" style="left:129.4px;top:245.44px"><x>C501</x></div>
<div class="t nf" style="left:185.1px;top:245.44px"><x>N</x>ot<z> </z><x>F</x>itted</div>
<div class="t nf" style="left:307.1px;top:245.44px"><x>N</x>ot<z> </z><x>F</x>itted</div>
<div class="t nf" style="left:429.1px;top:245.44px"><x>N</x>ot<z> </z><x>F</x>itted</div>
<div class="t nf" style="left:551.1px;top:245.44px"><x>N</x>ot<z> </z><x>F</x>itted</div>
<div class="t nf" style="left:673.1px;top:245.44px"><x>N</x>ot<z> </z><x>F</x>itted</div>
<div class="t nf" style="left:795.1px;top:245.44px"><x>N</x>ot<z> </z><x>F</x>itted</div>
<div class="rl" style="top:266.65px"></div>
<svg class="ci" style="left:15.8px;top:256.76px" width="10" height="10" viewBox="0 0 10 10"><g stroke="#9a9a9a" stroke-width="0.8"><path d="M0.3 1.5h1.8M0.3 3.4h1.8M0.3 5.5h1.8M0.3 7.5h1.8M7.3 1.5h1.7M7.3 3.4h1.7M7.3 5.5h1.7M7.3 7.5h1.7"/></g><rect x="2.1" y="0" width="5.3" height="9.1" fill="#4f86d8"/><rect x="2.6" y="0.5" width="4.3" height="8.1" fill="#74aaf2"/><path d="M2.9 1.6h3.7" stroke="#9cc4fa" stroke-width="0.6"/></svg>
<div class="t" style="left:27.3px;top:257.63px"><x>C1005X7R1E104M</x></div>
<div class="t" style="left:129.4px;top:257.63px"><x>C502</x></div>
<div class="t nf" style="left:185.1px;top:257.63px"><x>N</x>ot<z> </z><x>F</x>itted</div>
<div class="t nf" style="left:307.1px;top:257.63px"><x>N</x>ot<z> </z><x>F</x>itted</div>
<div class="t nf" style="left:429.1px;top:257.63px"><x>N</x>ot<z> </z><x>F</x>itted</div>
<div class="t nf" style="left:551.1px;top:257.63px"><x>N</x>ot<z> </z><x>F</x>itted</div>
<div class="t nf" style="left:673.1px;top:257.63px"><x>N</x>ot<z> </z><x>F</x>itted</div>
<div class="t nf" style="left:795.1px;top:257.63px"><x>N</x>ot<z> </z><x>F</x>itted</div>
<div class="rl" style="top:278.85px"></div>
<svg class="ci" style="left:15.8px;top:268.95px" width="10" height="10" viewBox="0 0 10 10"><g stroke="#9a9a9a" stroke-width="0.8"><path d="M0.3 1.5h1.8M0.3 3.4h1.8M0.3 5.5h1.8M0.3 7.5h1.8M7.3 1.5h1.7M7.3 3.4h1.7M7.3 5.5h1.7M7.3 7.5h1.7"/></g><rect x="2.1" y="0" width="5.3" height="9.1" fill="#4f86d8"/><rect x="2.6" y="0.5" width="4.3" height="8.1" fill="#74aaf2"/><path d="M2.9 1.6h3.7" stroke="#9cc4fa" stroke-width="0.6"/></svg>
<div class="t" style="left:27.3px;top:269.82px"><x>C1005X7R1E104M</x></div>
<div class="t" style="left:129.4px;top:269.82px"><x>C503</x></div>
<div class="t nf" style="left:185.1px;top:269.82px"><x>N</x>ot<z> </z><x>F</x>itted</div>
<div class="t nf" style="left:307.1px;top:269.82px"><x>N</x>ot<z> </z><x>F</x>itted</div>
<div class="t nf" style="left:429.1px;top:269.82px"><x>N</x>ot<z> </z><x>F</x>itted</div>
<div class="t nf" style="left:551.1px;top:269.82px"><x>N</x>ot<z> </z><x>F</x>itted</div>
<div class="t nf" style="left:673.1px;top:269.82px"><x>N</x>ot<z> </z><x>F</x>itted</div>
<div class="t nf" style="left:795.1px;top:269.82px"><x>N</x>ot<z> </z><x>F</x>itted</div>
<div class="rl" style="top:291.04px"></div>
<svg class="ci" style="left:15.8px;top:281.15px" width="10" height="10" viewBox="0 0 10 10"><g stroke="#9a9a9a" stroke-width="0.8"><path d="M0.3 1.5h1.8M0.3 3.4h1.8M0.3 5.5h1.8M0.3 7.5h1.8M7.3 1.5h1.7M7.3 3.4h1.7M7.3 5.5h1.7M7.3 7.5h1.7"/></g><rect x="2.1" y="0" width="5.3" height="9.1" fill="#4f86d8"/><rect x="2.6" y="0.5" width="4.3" height="8.1" fill="#74aaf2"/><path d="M2.9 1.6h3.7" stroke="#9cc4fa" stroke-width="0.6"/></svg>
<div class="t" style="left:27.3px;top:282.02px"><x>C1005X7R1E104M</x></div>
<div class="t" style="left:129.4px;top:282.02px"><x>C504</x></div>
<div class="t nf" style="left:185.1px;top:282.02px"><x>N</x>ot<z> </z><x>F</x>itted</div>
<div class="t nf" style="left:307.1px;top:282.02px"><x>N</x>ot<z> </z><x>F</x>itted</div>
<div class="t nf" style="left:429.1px;top:282.02px"><x>N</x>ot<z> </z><x>F</x>itted</div>
<div class="t nf" style="left:551.1px;top:282.02px"><x>N</x>ot<z> </z><x>F</x>itted</div>
<div class="t nf" style="left:673.1px;top:282.02px"><x>N</x>ot<z> </z><x>F</x>itted</div>
<div class="t nf" style="left:795.1px;top:282.02px"><x>N</x>ot<z> </z><x>F</x>itted</div>
<div class="rl" style="top:303.23px"></div>
<svg class="ci" style="left:15.8px;top:293.34px" width="10" height="10" viewBox="0 0 10 10"><g stroke="#9a9a9a" stroke-width="0.8"><path d="M0.3 1.5h1.8M0.3 3.4h1.8M0.3 5.5h1.8M0.3 7.5h1.8M7.3 1.5h1.7M7.3 3.4h1.7M7.3 5.5h1.7M7.3 7.5h1.7"/></g><rect x="2.1" y="0" width="5.3" height="9.1" fill="#4f86d8"/><rect x="2.6" y="0.5" width="4.3" height="8.1" fill="#74aaf2"/><path d="M2.9 1.6h3.7" stroke="#9cc4fa" stroke-width="0.6"/></svg>
<div class="t" style="left:27.3px;top:294.21px"><x>C1005X7R1E104M</x></div>
<div class="t" style="left:129.4px;top:294.21px"><x>C505</x></div>
<div class="t nf" style="left:185.1px;top:294.21px"><x>N</x>ot<z> </z><x>F</x>itted</div>
<div class="t nf" style="left:307.1px;top:294.21px"><x>N</x>ot<z> </z><x>F</x>itted</div>
<div class="t nf" style="left:429.1px;top:294.21px"><x>N</x>ot<z> </z><x>F</x>itted</div>
<div class="t nf" style="left:551.1px;top:294.21px"><x>N</x>ot<z> </z><x>F</x>itted</div>
<div class="t nf" style="left:673.1px;top:294.21px"><x>N</x>ot<z> </z><x>F</x>itted</div>
<div class="t nf" style="left:795.1px;top:294.21px"><x>N</x>ot<z> </z><x>F</x>itted</div>
<div class="rl" style="top:315.43px"></div>
<svg class="ci" style="left:15.8px;top:305.53px" width="10" height="10" viewBox="0 0 10 10"><g stroke="#9a9a9a" stroke-width="0.8"><path d="M0.3 1.5h1.8M0.3 3.4h1.8M0.3 5.5h1.8M0.3 7.5h1.8M7.3 1.5h1.7M7.3 3.4h1.7M7.3 5.5h1.7M7.3 7.5h1.7"/></g><rect x="2.1" y="0" width="5.3" height="9.1" fill="#4f86d8"/><rect x="2.6" y="0.5" width="4.3" height="8.1" fill="#74aaf2"/><path d="M2.9 1.6h3.7" stroke="#9cc4fa" stroke-width="0.6"/></svg>
<div class="t" style="left:27.3px;top:306.40px"><x>C1005X7R1E104M</x></div>
<div class="t" style="left:129.4px;top:306.40px"><x>C506</x></div>
<div class="t nf" style="left:185.1px;top:306.40px"><x>N</x>ot<z> </z><x>F</x>itted</div>
<div class="t nf" style="left:307.1px;top:306.40px"><x>N</x>ot<z> </z><x>F</x>itted</div>
<div class="t nf" style="left:429.1px;top:306.40px"><x>N</x>ot<z> </z><x>F</x>itted</div>
<div class="t nf" style="left:551.1px;top:306.40px"><x>N</x>ot<z> </z><x>F</x>itted</div>
<div class="t nf" style="left:673.1px;top:306.40px"><x>N</x>ot<z> </z><x>F</x>itted</div>
<div class="t nf" style="left:795.1px;top:306.40px"><x>N</x>ot<z> </z><x>F</x>itted</div>
<div class="rl" style="top:327.62px"></div>
<svg class="ci" style="left:15.8px;top:317.73px" width="10" height="10" viewBox="0 0 10 10"><g stroke="#9a9a9a" stroke-width="0.8"><path d="M0.3 1.5h1.8M0.3 3.4h1.8M0.3 5.5h1.8M0.3 7.5h1.8M7.3 1.5h1.7M7.3 3.4h1.7M7.3 5.5h1.7M7.3 7.5h1.7"/></g><rect x="2.1" y="0" width="5.3" height="9.1" fill="#4f86d8"/><rect x="2.6" y="0.5" width="4.3" height="8.1" fill="#74aaf2"/><path d="M2.9 1.6h3.7" stroke="#9cc4fa" stroke-width="0.6"/></svg>
<div class="t" style="left:27.3px;top:318.60px"><x>C1005X7R1E104M</x></div>
<div class="t" style="left:129.4px;top:318.60px"><x>C507</x></div>
<div class="t nf" style="left:185.1px;top:318.60px"><x>N</x>ot<z> </z><x>F</x>itted</div>
<div class="t nf" style="left:307.1px;top:318.60px"><x>N</x>ot<z> </z><x>F</x>itted</div>
<div class="t nf" style="left:429.1px;top:318.60px"><x>N</x>ot<z> </z><x>F</x>itted</div>
<div class="t nf" style="left:551.1px;top:318.60px"><x>N</x>ot<z> </z><x>F</x>itted</div>
<div class="t nf" style="left:673.1px;top:318.60px"><x>N</x>ot<z> </z><x>F</x>itted</div>
<div class="t nf" style="left:795.1px;top:318.60px"><x>N</x>ot<z> </z><x>F</x>itted</div>
<div class="rl" style="top:339.81px"></div>
<svg class="ci" style="left:15.8px;top:329.92px" width="10" height="10" viewBox="0 0 10 10"><g stroke="#9a9a9a" stroke-width="0.8"><path d="M0.3 1.5h1.8M0.3 3.4h1.8M0.3 5.5h1.8M0.3 7.5h1.8M7.3 1.5h1.7M7.3 3.4h1.7M7.3 5.5h1.7M7.3 7.5h1.7"/></g><rect x="2.1" y="0" width="5.3" height="9.1" fill="#4f86d8"/><rect x="2.6" y="0.5" width="4.3" height="8.1" fill="#74aaf2"/><path d="M2.9 1.6h3.7" stroke="#9cc4fa" stroke-width="0.6"/></svg>
<div class="t" style="left:27.3px;top:330.79px"><x>C1005X7R1E104M</x></div>
<div class="t" style="left:129.4px;top:330.79px"><x>C508</x></div>
<div class="t nf" style="left:185.1px;top:330.79px"><x>N</x>ot<z> </z><x>F</x>itted</div>
<div class="t nf" style="left:307.1px;top:330.79px"><x>N</x>ot<z> </z><x>F</x>itted</div>
<div class="t nf" style="left:429.1px;top:330.79px"><x>N</x>ot<z> </z><x>F</x>itted</div>
<div class="t nf" style="left:551.1px;top:330.79px"><x>N</x>ot<z> </z><x>F</x>itted</div>
<div class="t nf" style="left:673.1px;top:330.79px"><x>N</x>ot<z> </z><x>F</x>itted</div>
<div class="t nf" style="left:795.1px;top:330.79px"><x>N</x>ot<z> </z><x>F</x>itted</div>
<div class="rl" style="top:352.00px"></div>
<svg class="ci" style="left:15.8px;top:342.11px" width="10" height="10" viewBox="0 0 10 10"><g stroke="#9a9a9a" stroke-width="0.8"><path d="M0.3 1.5h1.8M0.3 3.4h1.8M0.3 5.5h1.8M0.3 7.5h1.8M7.3 1.5h1.7M7.3 3.4h1.7M7.3 5.5h1.7M7.3 7.5h1.7"/></g><rect x="2.1" y="0" width="5.3" height="9.1" fill="#4f86d8"/><rect x="2.6" y="0.5" width="4.3" height="8.1" fill="#74aaf2"/><path d="M2.9 1.6h3.7" stroke="#9cc4fa" stroke-width="0.6"/></svg>
<div class="t" style="left:27.3px;top:342.98px"><x>GRM31CR60J107ME39L</x></div>
<div class="t" style="left:129.4px;top:342.98px"><x>C509</x></div>
<div class="t nf" style="left:185.1px;top:342.98px"><x>N</x>ot<z> </z><x>F</x>itted</div>
<div class="t nf" style="left:307.1px;top:342.98px"><x>N</x>ot<z> </z><x>F</x>itted</div>
<div class="t nf" style="left:429.1px;top:342.98px"><x>N</x>ot<z> </z><x>F</x>itted</div>
<div class="t nf" style="left:551.1px;top:342.98px"><x>N</x>ot<z> </z><x>F</x>itted</div>
<div class="t nf" style="left:673.1px;top:342.98px"><x>N</x>ot<z> </z><x>F</x>itted</div>
<div class="t nf" style="left:795.1px;top:342.98px"><x>N</x>ot<z> </z><x>F</x>itted</div>
<div class="rl" style="top:364.20px"></div>
<svg class="ci" style="left:15.8px;top:354.30px" width="10" height="10" viewBox="0 0 10 10"><g stroke="#9a9a9a" stroke-width="0.8"><path d="M0.3 1.5h1.8M0.3 3.4h1.8M0.3 5.5h1.8M0.3 7.5h1.8M7.3 1.5h1.7M7.3 3.4h1.7M7.3 5.5h1.7M7.3 7.5h1.7"/></g><rect x="2.1" y="0" width="5.3" height="9.1" fill="#4f86d8"/><rect x="2.6" y="0.5" width="4.3" height="8.1" fill="#74aaf2"/><path d="M2.9 1.6h3.7" stroke="#9cc4fa" stroke-width="0.6"/></svg>
<div class="t" style="left:27.3px;top:355.17px"><x>PCIE</x><y>-</y><x>098</x><y>-</y><x>02</x><y>-</y><x>F</x><y>-</y><x>D</x><y>-</y><x>TH</x></div>
<div class="t" style="left:129.4px;top:355.17px"><x>J14</x></div>
<div class="t nf" style="left:185.1px;top:355.17px"><x>N</x>ot<z> </z><x>F</x>itted</div>
<div class="t nf" style="left:307.1px;top:355.17px"><x>N</x>ot<z> </z><x>F</x>itted</div>
<div class="t nf" style="left:429.1px;top:355.17px"><x>N</x>ot<z> </z><x>F</x>itted</div>
<div class="t nf" style="left:551.1px;top:355.17px"><x>N</x>ot<z> </z><x>F</x>itted</div>
<div class="t nf" style="left:673.1px;top:355.17px"><x>N</x>ot<z> </z><x>F</x>itted</div>
<div class="t nf" style="left:795.1px;top:355.17px"><x>N</x>ot<z> </z><x>F</x>itted</div>
<div class="rl" style="top:376.39px"></div>
<svg class="ci" style="left:15.8px;top:366.50px" width="10" height="10" viewBox="0 0 10 10"><g stroke="#9a9a9a" stroke-width="0.8"><path d="M0.3 1.5h1.8M0.3 3.4h1.8M0.3 5.5h1.8M0.3 7.5h1.8M7.3 1.5h1.7M7.3 3.4h1.7M7.3 5.5h1.7M7.3 7.5h1.7"/></g><rect x="2.1" y="0" width="5.3" height="9.1" fill="#4f86d8"/><rect x="2.6" y="0.5" width="4.3" height="8.1" fill="#74aaf2"/><path d="M2.9 1.6h3.7" stroke="#9cc4fa" stroke-width="0.6"/></svg>
<div class="t" style="left:27.3px;top:367.37px"><x>ERJ</x><y>-</y><x>2RKF4701X</x></div>
<div class="t" style="left:129.4px;top:367.37px"><x>R332</x></div>
<div class="t nf" style="left:185.1px;top:367.37px"><x>N</x>ot<z> </z><x>F</x>itted</div>
<div class="t nf" style="left:307.1px;top:367.37px"><x>N</x>ot<z> </z><x>F</x>itted</div>
<div class="t nf" style="left:429.1px;top:367.37px"><x>N</x>ot<z> </z><x>F</x>itted</div>
<div class="t nf" style="left:551.1px;top:367.37px"><x>N</x>ot<z> </z><x>F</x>itted</div>
<div class="t nf" style="left:673.1px;top:367.37px"><x>N</x>ot<z> </z><x>F</x>itted</div>
<div class="t nf" style="left:795.1px;top:367.37px"><x>N</x>ot<z> </z><x>F</x>itted</div>
<div class="rl" style="top:388.58px"></div>
<svg class="tr" style="left:5.3px;top:382.39px" width="3.2" height="2.6" viewBox="0 0 4 3"><path d="M0 0h4l-2 3z" fill="#d6d6d6"/></svg>
<svg class="fo" style="left:12px;top:379.59px" width="8.6" height="7.4" viewBox="0 0 9 8"><path d="M0 0.5h3.5l1 1h4.5v6.5h-9z" fill="#dcb666"/><path d="M0 2.5h9v5.5h-9z" fill="#f0d08a"/></svg>
<div class="t" style="left:24.2px;top:379.76px"><x>E</x>x<z> </z><y>(</y><x>DDR4</x><y>)</y></div>
<div class="t" style="left:185.1px;top:379.76px;color:#dedede"><x>E4</x><z> </z><y>(</y><x>4GB</x><y>)</y></div>
<svg class="tr" style="left:295.1px;top:383.09px" width="4.3" height="2.7" viewBox="0 0 6 4"><path d="M0 0h6l-3 4z" fill="#f0f0f0"/></svg>
<div class="t" style="left:307.1px;top:379.76px;color:#dedede"><x>E4</x><z> </z><y>(</y><x>4GB</x><y>)</y></div>
<svg class="tr" style="left:417.1px;top:383.09px" width="4.3" height="2.7" viewBox="0 0 6 4"><path d="M0 0h6l-3 4z" fill="#f0f0f0"/></svg>
<div class="t" style="left:429.1px;top:379.76px;color:#dedede"><x>E4</x><z> </z><y>(</y><x>4GB</x><y>)</y></div>
<svg class="tr" style="left:539.1px;top:383.09px" width="4.3" height="2.7" viewBox="0 0 6 4"><path d="M0 0h6l-3 4z" fill="#f0f0f0"/></svg>
<div class="t" style="left:551.1px;top:379.76px;color:#dedede"><x>E8</x><z> </z><y>(</y><x>8GB</x><y>)</y></div>
<svg class="tr" style="left:661.1px;top:383.09px" width="4.3" height="2.7" viewBox="0 0 6 4"><path d="M0 0h6l-3 4z" fill="#f0f0f0"/></svg>
<div class="t" style="left:673.1px;top:379.76px;color:#dedede"><x>E8</x><z> </z><y>(</y><x>8GB</x><y>)</y></div>
<svg class="tr" style="left:783.1px;top:383.09px" width="4.3" height="2.7" viewBox="0 0 6 4"><path d="M0 0h6l-3 4z" fill="#f0f0f0"/></svg>
<div class="t" style="left:795.1px;top:379.76px;color:#dedede"><x>E8</x><z> </z><y>(</y><x>8GB</x><y>)</y></div>
<svg class="tr" style="left:905.1px;top:383.09px" width="4.3" height="2.7" viewBox="0 0 6 4"><path d="M0 0h6l-3 4z" fill="#f0f0f0"/></svg>
<div class="rl" style="top:400.78px"></div>
<svg class="tr" style="left:5.3px;top:394.58px" width="3.2" height="2.6" viewBox="0 0 4 3"><path d="M0 0h4l-2 3z" fill="#d6d6d6"/></svg>
<svg class="fo" style="left:12px;top:391.78px" width="8.6" height="7.4" viewBox="0 0 9 8"><path d="M0 0.5h3.5l1 1h4.5v6.5h-9z" fill="#dcb666"/><path d="M0 2.5h9v5.5h-9z" fill="#f0d08a"/></svg>
<div class="t" style="left:24.2px;top:391.95px"><x>B</x>x<z> </z><y>(</y><x>E</x>thernet<y>)</y></div>
<div class="t" style="left:185.1px;top:391.95px;color:#dedede"><x>B1</x><z> </z><y>(</y>single<z> </z><x>E</x>thernet<y>)</y></div>
<svg class="tr" style="left:295.1px;top:395.28px" width="4.3" height="2.7" viewBox="0 0 6 4"><path d="M0 0h6l-3 4z" fill="#f0f0f0"/></svg>
<div class="t" style="left:307.1px;top:391.95px;color:#dedede"><x>B1</x><z> </z><y>(</y>single<z> </z><x>E</x>thernet<y>)</y></div>
<svg class="tr" style="left:417.1px;top:395.28px" width="4.3" height="2.7" viewBox="0 0 6 4"><path d="M0 0h6l-3 4z" fill="#f0f0f0"/></svg>
<div class="t" style="left:429.1px;top:391.95px;color:#dedede"><x>B1</x><z> </z><y>(</y>single<z> </z><x>E</x>thernet<y>)</y></div>
<svg class="tr" style="left:539.1px;top:395.28px" width="4.3" height="2.7" viewBox="0 0 6 4"><path d="M0 0h6l-3 4z" fill="#f0f0f0"/></svg>
<div class="t" style="left:551.1px;top:391.95px;color:#dedede"><x>B1</x><z> </z><y>(</y>single<z> </z><x>E</x>thernet<y>)</y></div>
<svg class="tr" style="left:661.1px;top:395.28px" width="4.3" height="2.7" viewBox="0 0 6 4"><path d="M0 0h6l-3 4z" fill="#f0f0f0"/></svg>
<div class="t" style="left:673.1px;top:391.95px;color:#dedede"><x>B1</x><z> </z><y>(</y>single<z> </z><x>E</x>thernet<y>)</y></div>
<svg class="tr" style="left:783.1px;top:395.28px" width="4.3" height="2.7" viewBox="0 0 6 4"><path d="M0 0h6l-3 4z" fill="#f0f0f0"/></svg>
<div class="t" style="left:795.1px;top:391.95px;color:#dedede"><x>B1</x><z> </z><y>(</y>single<z> </z><x>E</x>thernet<y>)</y></div>
<svg class="tr" style="left:905.1px;top:395.28px" width="4.3" height="2.7" viewBox="0 0 6 4"><path d="M0 0h6l-3 4z" fill="#f0f0f0"/></svg>
<div class="rl" style="top:412.97px"></div>
<svg class="tr" style="left:5.3px;top:406.78px" width="3.2" height="2.6" viewBox="0 0 4 3"><path d="M0 0h4l-2 3z" fill="#d6d6d6"/></svg>
<svg class="fo" style="left:12px;top:403.98px" width="8.6" height="7.4" viewBox="0 0 9 8"><path d="M0 0.5h3.5l1 1h4.5v6.5h-9z" fill="#dcb666"/><path d="M0 2.5h9v5.5h-9z" fill="#f0d08a"/></svg>
<div class="t" style="left:24.2px;top:404.15px"><x>C</x>x<z> </z><y>(</y><x>SFP</x><y>)</y></div>
<div class="t" style="left:185.1px;top:404.15px;color:#dedede"><x>C0</x><z> </z><y>(</y>no<z> </z><x>SFP</x><y>+)</y></div>
<svg class="tr" style="left:295.1px;top:407.48px" width="4.3" height="2.7" viewBox="0 0 6 4"><path d="M0 0h6l-3 4z" fill="#f0f0f0"/></svg>
<div class="t" style="left:307.1px;top:404.15px;color:#dedede"><x>C0</x><z> </z><y>(</y>no<z> </z><x>SFP</x><y>+)</y></div>
<svg class="tr" style="left:417.1px;top:407.48px" width="4.3" height="2.7" viewBox="0 0 6 4"><path d="M0 0h6l-3 4z" fill="#f0f0f0"/></svg>
<div class="t" style="left:429.1px;top:404.15px;color:#dedede"><x>C0</x><z> </z><y>(</y>no<z> </z><x>SFP</x><y>+)</y></div>
<svg class="tr" style="left:539.1px;top:407.48px" width="4.3" height="2.7" viewBox="0 0 6 4"><path d="M0 0h6l-3 4z" fill="#f0f0f0"/></svg>
<div class="t" style="left:551.1px;top:404.15px;color:#dedede"><x>C0</x><z> </z><y>(</y>no<z> </z><x>SFP</x><y>+)</y></div>
<svg class="tr" style="left:661.1px;top:407.48px" width="4.3" height="2.7" viewBox="0 0 6 4"><path d="M0 0h6l-3 4z" fill="#f0f0f0"/></svg>
<div class="t" style="left:673.1px;top:404.15px;color:#dedede"><x>C0</x><z> </z><y>(</y>no<z> </z><x>SFP</x><y>+)</y></div>
<svg class="tr" style="left:783.1px;top:407.48px" width="4.3" height="2.7" viewBox="0 0 6 4"><path d="M0 0h6l-3 4z" fill="#f0f0f0"/></svg>
<div class="t" style="left:795.1px;top:404.15px;color:#dedede"><x>C0</x><z> </z><y>(</y>no<z> </z><x>SFP</x><y>+)</y></div>
<svg class="tr" style="left:905.1px;top:407.48px" width="4.3" height="2.7" viewBox="0 0 6 4"><path d="M0 0h6l-3 4z" fill="#f0f0f0"/></svg>
<div class="rl" style="top:425.16px"></div>
<svg class="tr" style="left:5.3px;top:418.97px" width="3.2" height="2.6" viewBox="0 0 4 3"><path d="M0 0h4l-2 3z" fill="#d6d6d6"/></svg>
<svg class="fo" style="left:12px;top:416.17px" width="8.6" height="7.4" viewBox="0 0 9 8"><path d="M0 0.5h3.5l1 1h4.5v6.5h-9z" fill="#dcb666"/><path d="M0 2.5h9v5.5h-9z" fill="#f0d08a"/></svg>
<div class="t" style="left:24.2px;top:416.34px"><x>D</x>x<z> </z><y>(</y>mini<z> </z><x>PCIE</x><y>)</y></div>
<div class="t" style="left:185.1px;top:416.34px;color:#dedede"><x>D0</x><z> </z><y>(</y>no<z> </z>mini<z> </z><x>PCIE</x><y>)</y></div>
<svg class="tr" style="left:295.1px;top:419.67px" width="4.3" height="2.7" viewBox="0 0 6 4"><path d="M0 0h6l-3 4z" fill="#f0f0f0"/></svg>
<div class="t" style="left:307.1px;top:416.34px;color:#dedede"><x>D0</x><z> </z><y>(</y>no<z> </z>mini<z> </z><x>PCIE</x><y>)</y></div>
<svg class="tr" style="left:417.1px;top:419.67px" width="4.3" height="2.7" viewBox="0 0 6 4"><path d="M0 0h6l-3 4z" fill="#f0f0f0"/></svg>
<div class="t" style="left:429.1px;top:416.34px;color:#dedede"><x>D0</x><z> </z><y>(</y>no<z> </z>mini<z> </z><x>PCIE</x><y>)</y></div>
<svg class="tr" style="left:539.1px;top:419.67px" width="4.3" height="2.7" viewBox="0 0 6 4"><path d="M0 0h6l-3 4z" fill="#f0f0f0"/></svg>
<div class="t" style="left:551.1px;top:416.34px;color:#dedede"><x>D0</x><z> </z><y>(</y>no<z> </z>mini<z> </z><x>PCIE</x><y>)</y></div>
<svg class="tr" style="left:661.1px;top:419.67px" width="4.3" height="2.7" viewBox="0 0 6 4"><path d="M0 0h6l-3 4z" fill="#f0f0f0"/></svg>
<div class="t" style="left:673.1px;top:416.34px;color:#dedede"><x>D0</x><z> </z><y>(</y>no<z> </z>mini<z> </z><x>PCIE</x><y>)</y></div>
<svg class="tr" style="left:783.1px;top:419.67px" width="4.3" height="2.7" viewBox="0 0 6 4"><path d="M0 0h6l-3 4z" fill="#f0f0f0"/></svg>
<div class="t" style="left:795.1px;top:416.34px;color:#dedede"><x>D0</x><z> </z><y>(</y>no<z> </z>mini<z> </z><x>PCIE</x><y>)</y></div>
<svg class="tr" style="left:905.1px;top:419.67px" width="4.3" height="2.7" viewBox="0 0 6 4"><path d="M0 0h6l-3 4z" fill="#f0f0f0"/></svg>
<div class="rl" style="top:437.36px"></div>
<svg class="ci" style="left:15.8px;top:427.46px" width="10" height="10" viewBox="0 0 10 10"><g stroke="#9a9a9a" stroke-width="0.8"><path d="M0.3 1.5h1.8M0.3 3.4h1.8M0.3 5.5h1.8M0.3 7.5h1.8M7.3 1.5h1.7M7.3 3.4h1.7M7.3 5.5h1.7M7.3 7.5h1.7"/></g><rect x="2.1" y="0" width="5.3" height="9.1" fill="#4f86d8"/><rect x="2.6" y="0.5" width="4.3" height="8.1" fill="#74aaf2"/><path d="M2.9 1.6h3.7" stroke="#9cc4fa" stroke-width="0.6"/></svg>
<div class="t" style="left:27.3px;top:428.33px"><x>C1005X7R1E104M</x></div>
<div class="t" style="left:129.4px;top:428.33px"><x>C481</x></div>
<div class="t nf" style="left:185.1px;top:428.33px"><x>N</x>ot<z> </z><x>F</x>itted</div>
<div class="t nf" style="left:307.1px;top:428.33px"><x>N</x>ot<z> </z><x>F</x>itted</div>
<div class="t nf" style="left:429.1px;top:428.33px"><x>N</x>ot<z> </z><x>F</x>itted</div>
<div class="t nf" style="left:551.1px;top:428.33px"><x>N</x>ot<z> </z><x>F</x>itted</div>
<div class="t nf" style="left:673.1px;top:428.33px"><x>N</x>ot<z> </z><x>F</x>itted</div>
<div class="t nf" style="left:795.1px;top:428.33px"><x>N</x>ot<z> </z><x>F</x>itted</div>
<div class="rl" style="top:449.55px"></div>
<svg class="ci" style="left:15.8px;top:439.65px" width="10" height="10" viewBox="0 0 10 10"><g stroke="#9a9a9a" stroke-width="0.8"><path d="M0.3 1.5h1.8M0.3 3.4h1.8M0.3 5.5h1.8M0.3 7.5h1.8M7.3 1.5h1.7M7.3 3.4h1.7M7.3 5.5h1.7M7.3 7.5h1.7"/></g><rect x="2.1" y="0" width="5.3" height="9.1" fill="#4f86d8"/><rect x="2.6" y="0.5" width="4.3" height="8.1" fill="#74aaf2"/><path d="M2.9 1.6h3.7" stroke="#9cc4fa" stroke-width="0.6"/></svg>
<div class="t" style="left:27.3px;top:440.52px"><x>C1005X7R1E104M</x></div>
<div class="t" style="left:129.4px;top:440.52px"><x>C482</x></div>
<div class="t nf" style="left:185.1px;top:440.52px"><x>N</x>ot<z> </z><x>F</x>itted</div>
<div class="t nf" style="left:307.1px;top:440.52px"><x>N</x>ot<z> </z><x>F</x>itted</div>
<div class="t nf" style="left:429.1px;top:440.52px"><x>N</x>ot<z> </z><x>F</x>itted</div>
<div class="t nf" style="left:551.1px;top:440.52px"><x>N</x>ot<z> </z><x>F</x>itted</div>
<div class="t nf" style="left:673.1px;top:440.52px"><x>N</x>ot<z> </z><x>F</x>itted</div>
<div class="t nf" style="left:795.1px;top:440.52px"><x>N</x>ot<z> </z><x>F</x>itted</div>
<div class="rl" style="top:461.74px"></div>
<svg class="ci" style="left:15.8px;top:451.85px" width="10" height="10" viewBox="0 0 10 10"><g stroke="#9a9a9a" stroke-width="0.8"><path d="M0.3 1.5h1.8M0.3 3.4h1.8M0.3 5.5h1.8M0.3 7.5h1.8M7.3 1.5h1.7M7.3 3.4h1.7M7.3 5.5h1.7M7.3 7.5h1.7"/></g><rect x="2.1" y="0" width="5.3" height="9.1" fill="#4f86d8"/><rect x="2.6" y="0.5" width="4.3" height="8.1" fill="#74aaf2"/><path d="M2.9 1.6h3.7" stroke="#9cc4fa" stroke-width="0.6"/></svg>
<div class="t" style="left:27.3px;top:452.72px"><x>C1005X7R1E104M</x></div>
<div class="t" style="left:129.4px;top:452.72px"><x>C575</x></div>
<div class="t nf" style="left:185.1px;top:452.72px"><x>N</x>ot<z> </z><x>F</x>itted</div>
<div class="t nf" style="left:307.1px;top:452.72px"><x>N</x>ot<z> </z><x>F</x>itted</div>
<div class="t nf" style="left:429.1px;top:452.72px"><x>N</x>ot<z> </z><x>F</x>itted</div>
<div class="t nf" style="left:551.1px;top:452.72px"><x>N</x>ot<z> </z><x>F</x>itted</div>
<div class="t nf" style="left:673.1px;top:452.72px"><x>N</x>ot<z> </z><x>F</x>itted</div>
<div class="t nf" style="left:795.1px;top:452.72px"><x>N</x>ot<z> </z><x>F</x>itted</div>
<div class="rl" style="top:473.93px"></div>
<svg class="ci" style="left:15.8px;top:464.04px" width="10" height="10" viewBox="0 0 10 10"><g stroke="#9a9a9a" stroke-width="0.8"><path d="M0.3 1.5h1.8M0.3 3.4h1.8M0.3 5.5h1.8M0.3 7.5h1.8M7.3 1.5h1.7M7.3 3.4h1.7M7.3 5.5h1.7M7.3 7.5h1.7"/></g><rect x="2.1" y="0" width="5.3" height="9.1" fill="#4f86d8"/><rect x="2.6" y="0.5" width="4.3" height="8.1" fill="#74aaf2"/><path d="M2.9 1.6h3.7" stroke="#9cc4fa" stroke-width="0.6"/></svg>
<div class="t" style="left:27.3px;top:464.91px"><x>C1005X7R1E104M</x></div>
<div class="t" style="left:129.4px;top:464.91px"><x>C576</x></div>
<div class="t nf" style="left:185.1px;top:464.91px"><x>N</x>ot<z> </z><x>F</x>itted</div>
<div class="t nf" style="left:307.1px;top:464.91px"><x>N</x>ot<z> </z><x>F</x>itted</div>
<div class="t nf" style="left:429.1px;top:464.91px"><x>N</x>ot<z> </z><x>F</x>itted</div>
<div class="t nf" style="left:551.1px;top:464.91px"><x>N</x>ot<z> </z><x>F</x>itted</div>
<div class="t nf" style="left:673.1px;top:464.91px"><x>N</x>ot<z> </z><x>F</x>itted</div>
<div class="t nf" style="left:795.1px;top:464.91px"><x>N</x>ot<z> </z><x>F</x>itted</div>
<div class="rl" style="top:486.13px"></div>
<svg class="ci" style="left:15.8px;top:476.23px" width="10" height="10" viewBox="0 0 10 10"><g stroke="#9a9a9a" stroke-width="0.8"><path d="M0.3 1.5h1.8M0.3 3.4h1.8M0.3 5.5h1.8M0.3 7.5h1.8M7.3 1.5h1.7M7.3 3.4h1.7M7.3 5.5h1.7M7.3 7.5h1.7"/></g><rect x="2.1" y="0" width="5.3" height="9.1" fill="#4f86d8"/><rect x="2.6" y="0.5" width="4.3" height="8.1" fill="#74aaf2"/><path d="M2.9 1.6h3.7" stroke="#9cc4fa" stroke-width="0.6"/></svg>
<div class="t" style="left:27.3px;top:477.10px"><x>292443</x><y>-</y><x>1</x></div>
<div class="t" style="left:129.4px;top:477.10px"><x>J13</x></div>
<div class="t nf" style="left:185.1px;top:477.10px"><x>N</x>ot<z> </z><x>F</x>itted</div>
<div class="t nf" style="left:307.1px;top:477.10px"><x>N</x>ot<z> </z><x>F</x>itted</div>
<div class="t nf" style="left:429.1px;top:477.10px"><x>N</x>ot<z> </z><x>F</x>itted</div>
<div class="t nf" style="left:551.1px;top:477.10px"><x>N</x>ot<z> </z><x>F</x>itted</div>
<div class="t nf" style="left:673.1px;top:477.10px"><x>N</x>ot<z> </z><x>F</x>itted</div>
<div class="t nf" style="left:795.1px;top:477.10px"><x>N</x>ot<z> </z><x>F</x>itted</div>
<div class="rl" style="top:498.32px"></div>
<svg class="ci" style="left:15.8px;top:488.43px" width="10" height="10" viewBox="0 0 10 10"><g stroke="#9a9a9a" stroke-width="0.8"><path d="M0.3 1.5h1.8M0.3 3.4h1.8M0.3 5.5h1.8M0.3 7.5h1.8M7.3 1.5h1.7M7.3 3.4h1.7M7.3 5.5h1.7M7.3 7.5h1.7"/></g><rect x="2.1" y="0" width="5.3" height="9.1" fill="#4f86d8"/><rect x="2.6" y="0.5" width="4.3" height="8.1" fill="#74aaf2"/><path d="M2.9 1.6h3.7" stroke="#9cc4fa" stroke-width="0.6"/></svg>
<div class="t" style="left:27.3px;top:489.30px"><x>74754</x><y>-</y><x>0101</x></div>
<div class="t" style="left:129.4px;top:489.30px"><x>B1</x></div>
<div class="t nf" style="left:185.1px;top:489.30px"><x>N</x>ot<z> </z><x>F</x>itted</div>
<div class="t nf" style="left:307.1px;top:489.30px"><x>N</x>ot<z> </z><x>F</x>itted</div>
<div class="t nf" style="left:429.1px;top:489.30px"><x>N</x>ot<z> </z><x>F</x>itted</div>
<div class="t nf" style="left:551.1px;top:489.30px"><x>N</x>ot<z> </z><x>F</x>itted</div>
<div class="t nf" style="left:673.1px;top:489.30px"><x>N</x>ot<z> </z><x>F</x>itted</div>
<div class="t nf" style="left:795.1px;top:489.30px"><x>N</x>ot<z> </z><x>F</x>itted</div>
<div class="rl" style="top:510.51px"></div>
<svg class="ci" style="left:15.8px;top:500.62px" width="10" height="10" viewBox="0 0 10 10"><g stroke="#9a9a9a" stroke-width="0.8"><path d="M0.3 1.5h1.8M0.3 3.4h1.8M0.3 5.5h1.8M0.3 7.5h1.8M7.3 1.5h1.7M7.3 3.4h1.7M7.3 5.5h1.7M7.3 7.5h1.7"/></g><rect x="2.1" y="0" width="5.3" height="9.1" fill="#4f86d8"/><rect x="2.6" y="0.5" width="4.3" height="8.1" fill="#74aaf2"/><path d="M2.9 1.6h3.7" stroke="#9cc4fa" stroke-width="0.6"/></svg>
<div class="t" style="left:27.3px;top:501.49px"><x>74754</x><y>-</y><x>0101</x></div>
<div class="t" style="left:129.4px;top:501.49px"><x>B2</x></div>
<div class="t nf" style="left:185.1px;top:501.49px"><x>N</x>ot<z> </z><x>F</x>itted</div>
<div class="t nf" style="left:307.1px;top:501.49px"><x>N</x>ot<z> </z><x>F</x>itted</div>
<div class="t nf" style="left:429.1px;top:501.49px"><x>N</x>ot<z> </z><x>F</x>itted</div>
<div class="t nf" style="left:551.1px;top:501.49px"><x>N</x>ot<z> </z><x>F</x>itted</div>
<div class="t nf" style="left:673.1px;top:501.49px"><x>N</x>ot<z> </z><x>F</x>itted</div>
<div class="t nf" style="left:795.1px;top:501.49px"><x>N</x>ot<z> </z><x>F</x>itted</div>
<div class="rl" style="top:522.71px"></div>
<svg class="ci" style="left:15.8px;top:512.81px" width="10" height="10" viewBox="0 0 10 10"><g stroke="#9a9a9a" stroke-width="0.8"><path d="M0.3 1.5h1.8M0.3 3.4h1.8M0.3 5.5h1.8M0.3 7.5h1.8M7.3 1.5h1.7M7.3 3.4h1.7M7.3 5.5h1.7M7.3 7.5h1.7"/></g><rect x="2.1" y="0" width="5.3" height="9.1" fill="#4f86d8"/><rect x="2.6" y="0.5" width="4.3" height="8.1" fill="#74aaf2"/><path d="M2.9 1.6h3.7" stroke="#9cc4fa" stroke-width="0.6"/></svg>
<div class="t" style="left:27.3px;top:513.68px"><x>C1005X7R1E104M</x></div>
<div class="t" style="left:129.4px;top:513.68px"><x>C550</x></div>
<div class="t nf" style="left:185.1px;top:513.68px"><x>N</x>ot<z> </z><x>F</x>itted</div>
<div class="t nf" style="left:307.1px;top:513.68px"><x>N</x>ot<z> </z><x>F</x>itted</div>
<div class="t nf" style="left:429.1px;top:513.68px"><x>N</x>ot<z> </z><x>F</x>itted</div>
<div class="t nf" style="left:551.1px;top:513.68px"><x>N</x>ot<z> </z><x>F</x>itted</div>
<div class="t nf" style="left:673.1px;top:513.68px"><x>N</x>ot<z> </z><x>F</x>itted</div>
<div class="t nf" style="left:795.1px;top:513.68px"><x>N</x>ot<z> </z><x>F</x>itted</div>
<svg class="ci" style="left:15.8px;top:525.01px" width="10" height="10" viewBox="0 0 10 10"><g stroke="#9a9a9a" stroke-width="0.8"><path d="M0.3 1.5h1.8M0.3 3.4h1.8M0.3 5.5h1.8M0.3 7.5h1.8M7.3 1.5h1.7M7.3 3.4h1.7M7.3 5.5h1.7M7.3 7.5h1.7"/></g><rect x="2.1" y="0" width="5.3" height="9.1" fill="#4f86d8"/><rect x="2.6" y="0.5" width="4.3" height="8.1" fill="#74aaf2"/><path d="M2.9 1.6h3.7" stroke="#9cc4fa" stroke-width="0.6"/></svg>
<div class="t" style="left:27.3px;top:525.88px"><x>C1005X7R1E104M</x></div>
<div class="t" style="left:129.4px;top:525.88px"><x>C551</x></div>
<div class="t nf" style="left:185.1px;top:525.88px"><x>N</x>ot<z> </z><x>F</x>itted</div>
<div class="t nf" style="left:307.1px;top:525.88px"><x>N</x>ot<z> </z><x>F</x>itted</div>
<div class="t nf" style="left:429.1px;top:525.88px"><x>N</x>ot<z> </z><x>F</x>itted</div>
<div class="t nf" style="left:551.1px;top:525.88px"><x>N</x>ot<z> </z><x>F</x>itted</div>
<div class="t nf" style="left:673.1px;top:525.88px"><x>N</x>ot<z> </z><x>F</x>itted</div>
<div class="t nf" style="left:795.1px;top:525.88px"><x>N</x>ot<z> </z><x>F</x>itted</div>
<div class="vl" style="left:125.8px;top:12px;height:523px"></div>
<div class="vl" style="left:181.8px;top:12px;height:523px"></div>
<div class="vl" style="left:303.8px;top:12px;height:523px"></div>
<div class="vl" style="left:425.8px;top:12px;height:523px"></div>
<div class="vl" style="left:547.8px;top:12px;height:523px"></div>
<div class="vl" style="left:669.8px;top:12px;height:523px"></div>
<div class="vl" style="left:791.8px;top:12px;height:523px"></div>
<svg class="a" style="left:912.5px;top:14px" width="5" height="3" viewBox="0 0 5 3"><path d="M0 3h5l-2.5-3z" fill="#777"/></svg>
<div class="a" style="left:911.5px;top:22.3px;width:5px;height:20px;background:#a8a8a8;border-radius:2.5px"></div>
<svg class="a" style="left:912px;top:529px" width="6" height="4" viewBox="0 0 6 4"><path d="M0.5 0.5h5l-2.5 3z" fill="#888"/></svg>
<svg class="a" style="left:187px;top:538px" width="3" height="4" viewBox="0 0 3 4"><path d="M3 0v4l-3-2z" fill="#999"/></svg>
<div class="a" style="left:193px;top:536.5px;width:142px;height:3px;background:#9a9a9a;border-radius:2px"></div>
<svg class="a" style="left:903px;top:538px" width="3" height="4" viewBox="0 0 3 4"><path d="M0 0v4l3-2z" fill="#888"/></svg>
</div>
<div class="btn" style="left:4.8px;top:575.5px;width:56px;height:12.8px;line-height:12px"><x>D</x>rawing<z> </z><x>S</x>tyle</div>
<div class="btn" style="left:66px;top:575.5px;width:51px;height:12.8px;line-height:12px"><x>V</x>iew<z> </z><x>R</x>eport</div>
</div>
<div id="pop">
<div class="pbtn" style="left:7.5px;top:7.5px;width:109px;height:25.5px;line-height:23px;padding-left:2px">Add Group&nbsp;<svg width="9" height="5" viewBox="0 0 9 5" style="vertical-align:1px;margin-left:2px"><path d="M0 0h9l-4.5 4.5z" fill="#f2f2f2"/></svg></div>
<div class="pbtn" style="left:126px;top:7.5px;width:111px;height:25.5px;line-height:23px">Add Option</div>
<div class="a" style="left:6.5px;top:42px;width:273px;height:148px;background:#3d3d3d;border:1.5px solid #2d2d2d"></div>
<div class="a" style="left:9.5px;top:44.5px;width:266px;height:21.5px;background:#6a8fb0"></div>
<div class="a" style="left:12px;top:48.2px;font-size:11.5px;line-height:14px;color:#f4f7fa;white-space:nowrap"><x>A</x>x<z> </z><y>(</y><x>SODIMM</x><y>)</y></div>
<div class="a" style="left:12px;top:69.4px;font-size:11.5px;line-height:14px;color:#dcdcdc;white-space:nowrap"><x>E</x>x<z> </z><y>(</y><x>DDR4</x><y>)</y></div>
<div class="a" style="left:12px;top:90.6px;font-size:11.5px;line-height:14px;color:#dcdcdc;white-space:nowrap"><x>B</x>x<z> </z><y>(</y><x>E</x>thernet<y>)</y></div>
<div class="a" style="left:12px;top:111.8px;font-size:11.5px;line-height:14px;color:#dcdcdc;white-space:nowrap"><x>C</x>x<z> </z><y>(</y><x>SFP</x><y>)</y></div>
<div class="a" style="left:12px;top:133.0px;font-size:11.5px;line-height:14px;color:#dcdcdc;white-space:nowrap"><x>D</x>x<z> </z><y>(</y>mini<z> </z><x>PCIE</x><y>)</y></div>
<div class="a" style="left:12px;top:154.2px;font-size:11.5px;line-height:14px;color:#dcdcdc;white-space:nowrap"><x>F</x>x<z> </z><y>(</y><x>PCIE</x><z> </z><x>G</x>en<x>3</x><y>)</y></div>
<div class="a" style="left:6.5px;top:189.5px;width:273px;height:36.5px;background:#464646;border:1.5px solid #2d2d2d;border-top:none"></div>
<div class="pbtn" style="left:171px;top:195.5px;width:66.5px;height:25px;line-height:23px">Rename</div>
<div class="pbtn" style="left:242.5px;top:195.5px;width:30.5px;height:25px"><svg width="12" height="14" viewBox="0 0 12 14" style="position:absolute;left:8.5px;top:5px"><path d="M4 1.2h4" stroke="#bdbdbd" stroke-width="1.2"/><path d="M1 3h10" stroke="#bdbdbd" stroke-width="1.3"/><path d="M2.3 4.5h7.4l-0.6 8.5h-6.2z" fill="#bdbdbd"/><path d="M4.5 6v5.5M6 6v5.5M7.5 6v5.5" stroke="#8a8a8a" stroke-width="0.6"/></svg></div>
</div>
<div id="ov">
<div class="a" style="left:0;top:0;width:100%;height:23px;background:#4d4d4d;border-bottom:1.2px solid #242424"></div>
<div class="ot" style="left:9px;top:3.6px"><x>C</x>omponent</div>
<div class="ot" style="left:236.5px;top:3.6px"><x>D</x>esignator</div>
<div class="ot" style="left:350px;top:3.6px"><x>A0</x><z> </z><y>(</y>no<z> </z><x>SODIMM</x><y>)</y></div>
<div class="ot" style="left:577.5px;top:3.6px"><x>A1</x><z> </z><y>(</y>single<z> </z><x>SODIMM</x><y>)</y></div>
<div class="a" style="left:226.8px;top:4.5px;width:1.5px;height:13px;background:#262626"></div>
<div class="a" style="left:339.7px;top:4.5px;width:1.5px;height:13px;background:#262626"></div>
<div class="a" style="left:567px;top:4.5px;width:1.5px;height:13px;background:#262626"></div>
<svg class="a" style="left:4.5px;top:24.80px" width="18" height="17" viewBox="0 0 18 17"><g stroke="#a8a8a8" stroke-width="1.3"><path d="M1 3.2h3.9M1 6.5h3.9M1 9.8h3.9M1 13.6h3.9M13.9 3.2h3.6M13.9 6.5h3.6M13.9 9.8h3.6M13.9 13.6h3.6"/></g><rect x="5.4" y="0.7" width="8.1" height="15.6" fill="#8aabf2" stroke="#4f7fe8" stroke-width="0.9"/><path d="M6.6 15V2h5.6" fill="none" stroke="#bcd2fb" stroke-width="1.1"/></svg>
<div class="ot" style="left:27.5px;top:26.90px"><x>C1005X7R1E104M</x></div>
<div class="ot" style="left:236.5px;top:26.90px"><x>C283</x></div>
<div class="ot" style="left:350px;top:26.90px"><x>N</x>ot<z> </z><x>F</x>itted</div>
<div class="ot" style="left:577.5px;top:26.90px"><x>N</x>ot<z> </z><x>F</x>itted</div>
<div class="a" style="left:0;top:43.10px;width:100%;height:1px;background:#383838"></div>
<svg class="a" style="left:4.5px;top:46.40px" width="18" height="17" viewBox="0 0 18 17"><g stroke="#a8a8a8" stroke-width="1.3"><path d="M1 3.2h3.9M1 6.5h3.9M1 9.8h3.9M1 13.6h3.9M13.9 3.2h3.6M13.9 6.5h3.6M13.9 9.8h3.6M13.9 13.6h3.6"/></g><rect x="5.4" y="0.7" width="8.1" height="15.6" fill="#8aabf2" stroke="#4f7fe8" stroke-width="0.9"/><path d="M6.6 15V2h5.6" fill="none" stroke="#bcd2fb" stroke-width="1.1"/></svg>
<div class="ot" style="left:27.5px;top:48.50px"><x>C1005X7R1E104M</x></div>
<div class="ot" style="left:236.5px;top:48.50px"><x>C284</x></div>
<div class="ot" style="left:350px;top:48.50px"><x>N</x>ot<z> </z><x>F</x>itted</div>
<div class="ot" style="left:577.5px;top:48.50px"><x>N</x>ot<z> </z><x>F</x>itted</div>
<div class="a" style="left:0;top:64.70px;width:100%;height:1px;background:#383838"></div>
<svg class="a" style="left:4.5px;top:68.00px" width="18" height="17" viewBox="0 0 18 17"><g stroke="#a8a8a8" stroke-width="1.3"><path d="M1 3.2h3.9M1 6.5h3.9M1 9.8h3.9M1 13.6h3.9M13.9 3.2h3.6M13.9 6.5h3.6M13.9 9.8h3.6M13.9 13.6h3.6"/></g><rect x="5.4" y="0.7" width="8.1" height="15.6" fill="#8aabf2" stroke="#4f7fe8" stroke-width="0.9"/><path d="M6.6 15V2h5.6" fill="none" stroke="#bcd2fb" stroke-width="1.1"/></svg>
<div class="ot" style="left:27.5px;top:70.10px"><x>C1005X7R1E104M</x></div>
<div class="ot" style="left:236.5px;top:70.10px"><x>C285</x></div>
<div class="ot" style="left:350px;top:70.10px"><x>N</x>ot<z> </z><x>F</x>itted</div>
<div class="ot" style="left:577.5px;top:70.10px"><x>N</x>ot<z> </z><x>F</x>itted</div>
<div class="a" style="left:0;top:86.30px;width:100%;height:1px;background:#383838"></div>
<svg class="a" style="left:4.5px;top:89.60px" width="18" height="17" viewBox="0 0 18 17"><g stroke="#a8a8a8" stroke-width="1.3"><path d="M1 3.2h3.9M1 6.5h3.9M1 9.8h3.9M1 13.6h3.9M13.9 3.2h3.6M13.9 6.5h3.6M13.9 9.8h3.6M13.9 13.6h3.6"/></g><rect x="5.4" y="0.7" width="8.1" height="15.6" fill="#8aabf2" stroke="#4f7fe8" stroke-width="0.9"/><path d="M6.6 15V2h5.6" fill="none" stroke="#bcd2fb" stroke-width="1.1"/></svg>
<div class="ot" style="left:27.5px;top:91.70px"><x>C1005X7R1E104M</x></div>
<div class="ot" style="left:236.5px;top:91.70px"><x>C286</x></div>
<div class="ot" style="left:350px;top:91.70px"><x>N</x>ot<z> </z><x>F</x>itted</div>
<div class="ot" style="left:577.5px;top:91.70px"><x>N</x>ot<z> </z><x>F</x>itted</div>
<div class="a" style="left:0;top:107.90px;width:100%;height:1px;background:#383838"></div>
<svg class="a" style="left:4.5px;top:111.20px" width="18" height="17" viewBox="0 0 18 17"><g stroke="#a8a8a8" stroke-width="1.3"><path d="M1 3.2h3.9M1 6.5h3.9M1 9.8h3.9M1 13.6h3.9M13.9 3.2h3.6M13.9 6.5h3.6M13.9 9.8h3.6M13.9 13.6h3.6"/></g><rect x="5.4" y="0.7" width="8.1" height="15.6" fill="#8aabf2" stroke="#4f7fe8" stroke-width="0.9"/><path d="M6.6 15V2h5.6" fill="none" stroke="#bcd2fb" stroke-width="1.1"/></svg>
<div class="ot" style="left:27.5px;top:113.30px"><x>C1005X7R1E104M</x></div>
<div class="ot" style="left:236.5px;top:113.30px"><x>C287</x></div>
<div class="ot" style="left:350px;top:113.30px"><x>N</x>ot<z> </z><x>F</x>itted</div>
<div class="ot" style="left:577.5px;top:113.30px"><x>N</x>ot<z> </z><x>F</x>itted</div>
<div class="a" style="left:0;top:129.50px;width:100%;height:1px;background:#383838"></div>
<svg class="a" style="left:4.5px;top:132.80px" width="18" height="17" viewBox="0 0 18 17"><g stroke="#a8a8a8" stroke-width="1.3"><path d="M1 3.2h3.9M1 6.5h3.9M1 9.8h3.9M1 13.6h3.9M13.9 3.2h3.6M13.9 6.5h3.6M13.9 9.8h3.6M13.9 13.6h3.6"/></g><rect x="5.4" y="0.7" width="8.1" height="15.6" fill="#8aabf2" stroke="#4f7fe8" stroke-width="0.9"/><path d="M6.6 15V2h5.6" fill="none" stroke="#bcd2fb" stroke-width="1.1"/></svg>
<div class="ot" style="left:27.5px;top:134.90px"><x>C1005X7R1E104M</x></div>
<div class="ot" style="left:236.5px;top:134.90px"><x>C288</x></div>
<div class="ot" style="left:350px;top:134.90px"><x>N</x>ot<z> </z><x>F</x>itted</div>
<div class="ot" style="left:577.5px;top:134.90px"><x>N</x>ot<z> </z><x>F</x>itted</div>
<div class="a" style="left:0;top:151.10px;width:100%;height:1px;background:#383838"></div>
<svg class="a" style="left:4.5px;top:154.40px" width="18" height="17" viewBox="0 0 18 17"><g stroke="#a8a8a8" stroke-width="1.3"><path d="M1 3.2h3.9M1 6.5h3.9M1 9.8h3.9M1 13.6h3.9M13.9 3.2h3.6M13.9 6.5h3.6M13.9 9.8h3.6M13.9 13.6h3.6"/></g><rect x="5.4" y="0.7" width="8.1" height="15.6" fill="#8aabf2" stroke="#4f7fe8" stroke-width="0.9"/><path d="M6.6 15V2h5.6" fill="none" stroke="#bcd2fb" stroke-width="1.1"/></svg>
<div class="ot" style="left:27.5px;top:156.50px"><x>C1005X7R1E104M</x></div>
<div class="ot" style="left:236.5px;top:156.50px"><x>C289</x></div>
<div class="ot" style="left:350px;top:156.50px"><x>N</x>ot<z> </z><x>F</x>itted</div>
<div class="ot" style="left:577.5px;top:156.50px"><x>N</x>ot<z> </z><x>F</x>itted</div>
<div class="a" style="left:0;top:172.70px;width:100%;height:1px;background:#383838"></div>
<svg class="a" style="left:4.5px;top:176.00px" width="18" height="17" viewBox="0 0 18 17"><g stroke="#a8a8a8" stroke-width="1.3"><path d="M1 3.2h3.9M1 6.5h3.9M1 9.8h3.9M1 13.6h3.9M13.9 3.2h3.6M13.9 6.5h3.6M13.9 9.8h3.6M13.9 13.6h3.6"/></g><rect x="5.4" y="0.7" width="8.1" height="15.6" fill="#8aabf2" stroke="#4f7fe8" stroke-width="0.9"/><path d="M6.6 15V2h5.6" fill="none" stroke="#bcd2fb" stroke-width="1.1"/></svg>
<div class="ot" style="left:27.5px;top:178.10px"><x>C1005X7R1E104M</x></div>
<div class="ot" style="left:236.5px;top:178.10px"><x>C290</x></div>
<div class="ot" style="left:350px;top:178.10px"><x>N</x>ot<z> </z><x>F</x>itted</div>
<div class="a" style="left:0;top:194.30px;width:100%;height:1px;background:#383838"></div>
<svg class="a" style="left:4.5px;top:197.60px" width="18" height="17" viewBox="0 0 18 17"><g stroke="#a8a8a8" stroke-width="1.3"><path d="M1 3.2h3.9M1 6.5h3.9M1 9.8h3.9M1 13.6h3.9M13.9 3.2h3.6M13.9 6.5h3.6M13.9 9.8h3.6M13.9 13.6h3.6"/></g><rect x="5.4" y="0.7" width="8.1" height="15.6" fill="#8aabf2" stroke="#4f7fe8" stroke-width="0.9"/><path d="M6.6 15V2h5.6" fill="none" stroke="#bcd2fb" stroke-width="1.1"/></svg>
<div class="ot" style="left:27.5px;top:199.70px"><x>AS0A823</x><y>-</y><x>H8SB</x><y>-</y><x>7H</x></div>
<div class="ot" style="left:236.5px;top:199.70px"><x>J8</x></div>
<div class="ot" style="left:350px;top:199.70px"><x>N</x>ot<z> </z><x>F</x>itted</div>
<div class="ot" style="left:577.5px;top:199.70px"><x>N</x>ot<z> </z><x>F</x>itted</div>
<div class="a" style="left:227.0px;top:22px;width:1px;height:195px;background:#353535"></div>
<div class="a" style="left:339.9px;top:22px;width:1px;height:195px;background:#353535"></div>
<div class="a" style="left:567.2px;top:22px;width:1px;height:195px;background:#353535"></div>
</div>
</body></html>
